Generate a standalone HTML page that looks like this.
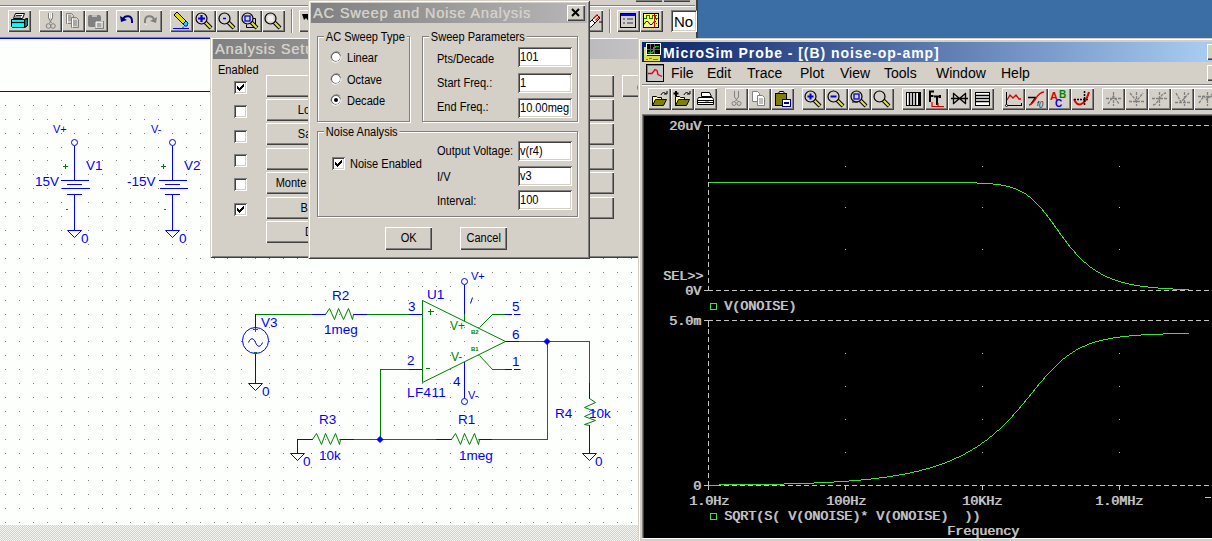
<!DOCTYPE html><html><head><meta charset="utf-8"><style>html,body{margin:0;padding:0;}body{width:1212px;height:541px;overflow:hidden;position:relative;background:#d4d0c8;font-family:'Liberation Sans', sans-serif;}div{box-sizing:border-box;}</style></head><body>
<div style="position:absolute;left:0px;top:0px;width:697px;height:38px;background:#d4d0c8"></div>
<div style="position:absolute;left:400px;top:0px;width:40px;height:2px;background:#808080;border-bottom:1px solid #404040"></div>
<div style="position:absolute;left:636px;top:0px;width:26px;height:2px;background:#808080;border-bottom:1px solid #404040"></div>
<div style="position:absolute;left:664px;top:0px;width:26px;height:2px;background:#808080;border-bottom:1px solid #404040"></div>
<div style="position:absolute;left:0px;top:5px;width:695px;height:1px;background:#808080"></div>
<div style="position:absolute;left:0px;top:6px;width:695px;height:1px;background:#fff"></div>
<div style="position:absolute;left:696px;top:0px;width:2px;height:38px;background:#404040"></div>
<div style="position:absolute;left:8px;top:10px;width:23px;height:22px;background:#d4d0c8;box-shadow:inset 1px 1px #fff, inset -1px -1px #404040, inset -2px -2px #808080;"></div>
<div style="position:absolute;left:39px;top:10px;width:23px;height:22px;background:#d4d0c8;box-shadow:inset 1px 1px #fff, inset -1px -1px #404040, inset -2px -2px #808080;"></div>
<div style="position:absolute;left:62px;top:10px;width:23px;height:22px;background:#d4d0c8;box-shadow:inset 1px 1px #fff, inset -1px -1px #404040, inset -2px -2px #808080;"></div>
<div style="position:absolute;left:85px;top:10px;width:23px;height:22px;background:#d4d0c8;box-shadow:inset 1px 1px #fff, inset -1px -1px #404040, inset -2px -2px #808080;"></div>
<div style="position:absolute;left:116px;top:10px;width:23px;height:22px;background:#d4d0c8;box-shadow:inset 1px 1px #fff, inset -1px -1px #404040, inset -2px -2px #808080;"></div>
<div style="position:absolute;left:139px;top:10px;width:23px;height:22px;background:#d4d0c8;box-shadow:inset 1px 1px #fff, inset -1px -1px #404040, inset -2px -2px #808080;"></div>
<div style="position:absolute;left:170px;top:10px;width:23px;height:22px;background:#d4d0c8;box-shadow:inset 1px 1px #fff, inset -1px -1px #404040, inset -2px -2px #808080;"></div>
<div style="position:absolute;left:193px;top:10px;width:23px;height:22px;background:#d4d0c8;box-shadow:inset 1px 1px #fff, inset -1px -1px #404040, inset -2px -2px #808080;"></div>
<div style="position:absolute;left:216px;top:10px;width:23px;height:22px;background:#d4d0c8;box-shadow:inset 1px 1px #fff, inset -1px -1px #404040, inset -2px -2px #808080;"></div>
<div style="position:absolute;left:239px;top:10px;width:23px;height:22px;background:#d4d0c8;box-shadow:inset 1px 1px #fff, inset -1px -1px #404040, inset -2px -2px #808080;"></div>
<div style="position:absolute;left:262px;top:10px;width:23px;height:22px;background:#d4d0c8;box-shadow:inset 1px 1px #fff, inset -1px -1px #404040, inset -2px -2px #808080;"></div>
<div style="position:absolute;left:299px;top:10px;width:23px;height:22px;background:#d4d0c8;box-shadow:inset 1px 1px #fff, inset -1px -1px #404040, inset -2px -2px #808080;"></div>
<div style="position:absolute;left:580px;top:10px;width:23px;height:22px;background:#d4d0c8;box-shadow:inset 1px 1px #fff, inset -1px -1px #404040, inset -2px -2px #808080;"></div>
<div style="position:absolute;left:617px;top:10px;width:23px;height:22px;background:#d4d0c8;box-shadow:inset 1px 1px #fff, inset -1px -1px #404040, inset -2px -2px #808080;"></div>
<div style="position:absolute;left:640px;top:10px;width:23px;height:22px;background:#d4d0c8;box-shadow:inset 1px 1px #fff, inset -1px -1px #404040, inset -2px -2px #808080;"></div>
<div style="position:absolute;left:291px;top:9px;width:1px;height:24px;background:#808080"></div>
<div style="position:absolute;left:292px;top:9px;width:1px;height:24px;background:#fff"></div>
<div style="position:absolute;left:609px;top:9px;width:1px;height:24px;background:#808080"></div>
<div style="position:absolute;left:610px;top:9px;width:1px;height:24px;background:#fff"></div>
<div style="position:absolute;left:671px;top:10px;width:26px;height:22px;background:#fff;box-shadow:inset 1px 1px #808080, inset -1px -1px #fff, inset 2px 2px #404040, inset -2px -2px #d4d0c8;"></div>
<div style="position:absolute;left:674px;top:14px;font-size:15px;line-height:1;color:#000;white-space:pre;">No</div>
<svg style="position:absolute;left:0;top:0" width="697" height="38"><g transform="translate(8,10)"><path d="M7.5 3.5h9l-2 5h-9z" fill="#fff" stroke="#000"/><path d="M8 5.5h6M7 7h6" stroke="#000" stroke-width="0.8"/><path d="M3.5 9.5h13l3 -1v7l-3 2h-12l-1-1z" fill="#00ffff" stroke="#000"/><path d="M4 12.5h12.5" stroke="#000" stroke-width="1.2"/><path d="M16.5 9.5v8l3-2v-7z" fill="#008080" stroke="#000"/></g><g transform="translate(39,10)" fill="none" stroke="#808080"><path d="M9.5 3v5l3 5M13.5 3v5l-3 5"/><path d="M10.5 3v5M12.5 3v5" stroke="#fff"/><circle cx="9.5" cy="16" r="2.3"/><circle cx="14" cy="16" r="2.3"/></g><g transform="translate(62,10)" stroke="#808080" fill="#d4d0c8"><path d="M4.5 3.5h5l2 2v8h-7z"/><path d="M9.5 7.5h5l2 2v8h-7z" fill="#d4d0c8"/><path d="M6 6h3M6 8h4M6 10h4M11 11h4M11 13h4M11 15h4" fill="none"/><path d="M10.5 8.5v9M5.5 4.5v9" stroke="#fff"/></g><g transform="translate(85,10)"><rect x="3" y="5" width="13" height="12" rx="2" fill="#808080"/><path d="M7 6h5" stroke="#fff"/><rect x="10.5" y="11.5" width="8" height="7" fill="#d4d0c8" stroke="#808080"/><path d="M12 14h4M12 16h4" stroke="#808080"/><path d="M11 12h7M11 12v6" stroke="#fff"/></g><g transform="translate(116,10)"><path d="M7 9c2-4 9-4 9 2v2" fill="none" stroke="#000080" stroke-width="2"/><path d="M4 6l1 6 6-2z" fill="#000080"/></g><g transform="translate(139,10)"><path d="M15 9c-2-4-9-4-9 2v2" fill="none" stroke="#808080" stroke-width="2"/><path d="M18 7l-1 6-6-2z" fill="#808080"/><path d="M7 14v1" stroke="#fff"/></g><g transform="translate(170,10)"><path d="M4 5l3-3 9 9-3 3z" fill="#e0e000" stroke="#000"/><path d="M13 14l3-3 2 2-1 3-2 0z" fill="#00e0ff" stroke="#0000ff"/><path d="M3 18.5h16" stroke="#0000ff"/><path d="M14 16.5l-2 2" stroke="#0000ff"/></g><g transform="translate(193,10)"><path d="M12 12l6 6" stroke="#000" stroke-width="4"/><path d="M12.3 12.3l5.4 5.4" stroke="#e0e040" stroke-width="2"/><circle cx="8.5" cy="8.5" r="5.5" fill="#d4d0c8" stroke="#000" stroke-width="1.2"/><path d="M5 8.5h7M8.5 5v7" stroke="#0000e0" stroke-width="2.2"/></g><g transform="translate(216,10)"><path d="M12 12l6 6" stroke="#000" stroke-width="4"/><path d="M12.3 12.3l5.4 5.4" stroke="#e0e040" stroke-width="2"/><circle cx="8.5" cy="8.5" r="5.5" fill="#d4d0c8" stroke="#000" stroke-width="1.2"/><path d="M7 8.5h3" stroke="#0000e0" stroke-width="1.5"/></g><g transform="translate(239,10)"><path d="M9.5 8.5h7v9h-9v-3" fill="#d4d0c8" stroke="#000"/><path d="M12 12l6 6" stroke="#000" stroke-width="4"/><path d="M12.3 12.3l5.4 5.4" stroke="#e0e040" stroke-width="2"/><circle cx="8.5" cy="8.5" r="5.5" fill="#d4d0c8" stroke="#000" stroke-width="1.2"/><rect x="6" y="6" width="5" height="5" fill="none" stroke="#0000e0" stroke-width="1.3"/></g><g transform="translate(262,10)"><path d="M12 12l6 6" stroke="#000" stroke-width="4"/><path d="M12.3 12.3l5.4 5.4" stroke="#e0e040" stroke-width="2"/><circle cx="8.5" cy="8.5" r="5.5" fill="#d4d0c8" stroke="#000" stroke-width="1.2"/><rect x="5.5" y="5.5" width="6" height="6" fill="#f0f0f0" stroke="none"/></g><g transform="translate(617,10)" shape-rendering="crispEdges"><rect x="3.5" y="3.5" width="15" height="14" fill="#d4d0c8" stroke="#000"/><rect x="4" y="4" width="14" height="2" fill="#0000ff"/><path d="M6 9h2M10 9h6M6 13h2M10 13h6" stroke="#808080" stroke-width="1.5"/></g><g transform="translate(640,10)" shape-rendering="crispEdges"><rect x="3.5" y="3.5" width="15" height="14" fill="#ffff60" stroke="#000"/><path d="M4 8.5h2v-3h3v3h3v-3h3v3h3" fill="none" stroke="#008000"/><path d="M4 14.5l2-3h2l2 3h2l2-3h2" fill="none" stroke="#0000c0" shape-rendering="auto"/><path d="M14.5 4v13" stroke="#e00000"/><path d="M16 5v1M16 9v1M16 13v1" stroke="#e00000"/></g><g transform="translate(299,10)"><path d="M3 4h8l-2 2 4 5-2 2-4-5-2 2z" fill="#000"/><path d="M9 11l3 3" stroke="#fff"/></g><g transform="translate(580,10)"><path d="M8 14l4-4c2-1 4 1 3 3l-4 4c-2 1-4-1-3-3z" fill="#fff" stroke="#000"/><path d="M12 10l5-5 3 3-5 5z" fill="#fff" stroke="#000"/><path d="M13.5 8.5l4-4M15.5 10.5l4-4" stroke="#e00000" stroke-width="1.3"/><path d="M19 12h3" stroke="#000"/></g></svg>
<div style="position:absolute;left:698px;top:0px;width:514px;height:38px;background:#3a6ea5"></div>
<div style="position:absolute;left:0px;top:37px;width:639px;height:488px;background:#fcfffc"></div>
<div style="position:absolute;left:0px;top:37px;width:639px;height:1px;background:#808080"></div>
<div style="position:absolute;left:0px;top:525px;width:639px;height:16px;background-color:#d4d0c8;background-image:repeating-conic-gradient(#f4f4f0 0% 25%, #d4d0c8 0% 50%);background-size:2px 2px"></div>
<svg style="position:absolute;left:0;top:0" width="639" height="525"><rect x="0" y="38" width="639" height="1" fill="#0000ff"/><rect x="0" y="91" width="639" height="1" fill="#0000ff"/><path d="M5 105h1v1h-1zM19 105h1v1h-1zM33 105h1v1h-1zM47 105h1v1h-1zM61 105h1v1h-1zM74 105h1v1h-1zM88 105h1v1h-1zM102 105h1v1h-1zM116 105h1v1h-1zM130 105h1v1h-1zM144 105h1v1h-1zM158 105h1v1h-1zM172 105h1v1h-1zM186 105h1v1h-1zM200 105h1v1h-1zM214 105h1v1h-1zM227 105h1v1h-1zM241 105h1v1h-1zM255 105h1v1h-1zM269 105h1v1h-1zM283 105h1v1h-1zM297 105h1v1h-1zM311 105h1v1h-1zM325 105h1v1h-1zM339 105h1v1h-1zM353 105h1v1h-1zM367 105h1v1h-1zM380 105h1v1h-1zM394 105h1v1h-1zM408 105h1v1h-1zM422 105h1v1h-1zM436 105h1v1h-1zM450 105h1v1h-1zM464 105h1v1h-1zM478 105h1v1h-1zM492 105h1v1h-1zM506 105h1v1h-1zM520 105h1v1h-1zM533 105h1v1h-1zM547 105h1v1h-1zM561 105h1v1h-1zM575 105h1v1h-1zM589 105h1v1h-1zM603 105h1v1h-1zM617 105h1v1h-1zM631 105h1v1h-1zM5 119h1v1h-1zM19 119h1v1h-1zM33 119h1v1h-1zM47 119h1v1h-1zM61 119h1v1h-1zM74 119h1v1h-1zM88 119h1v1h-1zM102 119h1v1h-1zM116 119h1v1h-1zM130 119h1v1h-1zM144 119h1v1h-1zM158 119h1v1h-1zM172 119h1v1h-1zM186 119h1v1h-1zM200 119h1v1h-1zM214 119h1v1h-1zM227 119h1v1h-1zM241 119h1v1h-1zM255 119h1v1h-1zM269 119h1v1h-1zM283 119h1v1h-1zM297 119h1v1h-1zM311 119h1v1h-1zM325 119h1v1h-1zM339 119h1v1h-1zM353 119h1v1h-1zM367 119h1v1h-1zM380 119h1v1h-1zM394 119h1v1h-1zM408 119h1v1h-1zM422 119h1v1h-1zM436 119h1v1h-1zM450 119h1v1h-1zM464 119h1v1h-1zM478 119h1v1h-1zM492 119h1v1h-1zM506 119h1v1h-1zM520 119h1v1h-1zM533 119h1v1h-1zM547 119h1v1h-1zM561 119h1v1h-1zM575 119h1v1h-1zM589 119h1v1h-1zM603 119h1v1h-1zM617 119h1v1h-1zM631 119h1v1h-1zM5 133h1v1h-1zM19 133h1v1h-1zM33 133h1v1h-1zM47 133h1v1h-1zM61 133h1v1h-1zM74 133h1v1h-1zM88 133h1v1h-1zM102 133h1v1h-1zM116 133h1v1h-1zM130 133h1v1h-1zM144 133h1v1h-1zM158 133h1v1h-1zM172 133h1v1h-1zM186 133h1v1h-1zM200 133h1v1h-1zM214 133h1v1h-1zM227 133h1v1h-1zM241 133h1v1h-1zM255 133h1v1h-1zM269 133h1v1h-1zM283 133h1v1h-1zM297 133h1v1h-1zM311 133h1v1h-1zM325 133h1v1h-1zM339 133h1v1h-1zM353 133h1v1h-1zM367 133h1v1h-1zM380 133h1v1h-1zM394 133h1v1h-1zM408 133h1v1h-1zM422 133h1v1h-1zM436 133h1v1h-1zM450 133h1v1h-1zM464 133h1v1h-1zM478 133h1v1h-1zM492 133h1v1h-1zM506 133h1v1h-1zM520 133h1v1h-1zM533 133h1v1h-1zM547 133h1v1h-1zM561 133h1v1h-1zM575 133h1v1h-1zM589 133h1v1h-1zM603 133h1v1h-1zM617 133h1v1h-1zM631 133h1v1h-1zM5 147h1v1h-1zM19 147h1v1h-1zM33 147h1v1h-1zM47 147h1v1h-1zM61 147h1v1h-1zM74 147h1v1h-1zM88 147h1v1h-1zM102 147h1v1h-1zM116 147h1v1h-1zM130 147h1v1h-1zM144 147h1v1h-1zM158 147h1v1h-1zM172 147h1v1h-1zM186 147h1v1h-1zM200 147h1v1h-1zM214 147h1v1h-1zM227 147h1v1h-1zM241 147h1v1h-1zM255 147h1v1h-1zM269 147h1v1h-1zM283 147h1v1h-1zM297 147h1v1h-1zM311 147h1v1h-1zM325 147h1v1h-1zM339 147h1v1h-1zM353 147h1v1h-1zM367 147h1v1h-1zM380 147h1v1h-1zM394 147h1v1h-1zM408 147h1v1h-1zM422 147h1v1h-1zM436 147h1v1h-1zM450 147h1v1h-1zM464 147h1v1h-1zM478 147h1v1h-1zM492 147h1v1h-1zM506 147h1v1h-1zM520 147h1v1h-1zM533 147h1v1h-1zM547 147h1v1h-1zM561 147h1v1h-1zM575 147h1v1h-1zM589 147h1v1h-1zM603 147h1v1h-1zM617 147h1v1h-1zM631 147h1v1h-1zM5 160h1v1h-1zM19 160h1v1h-1zM33 160h1v1h-1zM47 160h1v1h-1zM61 160h1v1h-1zM74 160h1v1h-1zM88 160h1v1h-1zM102 160h1v1h-1zM116 160h1v1h-1zM130 160h1v1h-1zM144 160h1v1h-1zM158 160h1v1h-1zM172 160h1v1h-1zM186 160h1v1h-1zM200 160h1v1h-1zM214 160h1v1h-1zM227 160h1v1h-1zM241 160h1v1h-1zM255 160h1v1h-1zM269 160h1v1h-1zM283 160h1v1h-1zM297 160h1v1h-1zM311 160h1v1h-1zM325 160h1v1h-1zM339 160h1v1h-1zM353 160h1v1h-1zM367 160h1v1h-1zM380 160h1v1h-1zM394 160h1v1h-1zM408 160h1v1h-1zM422 160h1v1h-1zM436 160h1v1h-1zM450 160h1v1h-1zM464 160h1v1h-1zM478 160h1v1h-1zM492 160h1v1h-1zM506 160h1v1h-1zM520 160h1v1h-1zM533 160h1v1h-1zM547 160h1v1h-1zM561 160h1v1h-1zM575 160h1v1h-1zM589 160h1v1h-1zM603 160h1v1h-1zM617 160h1v1h-1zM631 160h1v1h-1zM5 174h1v1h-1zM19 174h1v1h-1zM33 174h1v1h-1zM47 174h1v1h-1zM61 174h1v1h-1zM74 174h1v1h-1zM88 174h1v1h-1zM102 174h1v1h-1zM116 174h1v1h-1zM130 174h1v1h-1zM144 174h1v1h-1zM158 174h1v1h-1zM172 174h1v1h-1zM186 174h1v1h-1zM200 174h1v1h-1zM214 174h1v1h-1zM227 174h1v1h-1zM241 174h1v1h-1zM255 174h1v1h-1zM269 174h1v1h-1zM283 174h1v1h-1zM297 174h1v1h-1zM311 174h1v1h-1zM325 174h1v1h-1zM339 174h1v1h-1zM353 174h1v1h-1zM367 174h1v1h-1zM380 174h1v1h-1zM394 174h1v1h-1zM408 174h1v1h-1zM422 174h1v1h-1zM436 174h1v1h-1zM450 174h1v1h-1zM464 174h1v1h-1zM478 174h1v1h-1zM492 174h1v1h-1zM506 174h1v1h-1zM520 174h1v1h-1zM533 174h1v1h-1zM547 174h1v1h-1zM561 174h1v1h-1zM575 174h1v1h-1zM589 174h1v1h-1zM603 174h1v1h-1zM617 174h1v1h-1zM631 174h1v1h-1zM5 188h1v1h-1zM19 188h1v1h-1zM33 188h1v1h-1zM47 188h1v1h-1zM61 188h1v1h-1zM74 188h1v1h-1zM88 188h1v1h-1zM102 188h1v1h-1zM116 188h1v1h-1zM130 188h1v1h-1zM144 188h1v1h-1zM158 188h1v1h-1zM172 188h1v1h-1zM186 188h1v1h-1zM200 188h1v1h-1zM214 188h1v1h-1zM227 188h1v1h-1zM241 188h1v1h-1zM255 188h1v1h-1zM269 188h1v1h-1zM283 188h1v1h-1zM297 188h1v1h-1zM311 188h1v1h-1zM325 188h1v1h-1zM339 188h1v1h-1zM353 188h1v1h-1zM367 188h1v1h-1zM380 188h1v1h-1zM394 188h1v1h-1zM408 188h1v1h-1zM422 188h1v1h-1zM436 188h1v1h-1zM450 188h1v1h-1zM464 188h1v1h-1zM478 188h1v1h-1zM492 188h1v1h-1zM506 188h1v1h-1zM520 188h1v1h-1zM533 188h1v1h-1zM547 188h1v1h-1zM561 188h1v1h-1zM575 188h1v1h-1zM589 188h1v1h-1zM603 188h1v1h-1zM617 188h1v1h-1zM631 188h1v1h-1zM5 202h1v1h-1zM19 202h1v1h-1zM33 202h1v1h-1zM47 202h1v1h-1zM61 202h1v1h-1zM74 202h1v1h-1zM88 202h1v1h-1zM102 202h1v1h-1zM116 202h1v1h-1zM130 202h1v1h-1zM144 202h1v1h-1zM158 202h1v1h-1zM172 202h1v1h-1zM186 202h1v1h-1zM200 202h1v1h-1zM214 202h1v1h-1zM227 202h1v1h-1zM241 202h1v1h-1zM255 202h1v1h-1zM269 202h1v1h-1zM283 202h1v1h-1zM297 202h1v1h-1zM311 202h1v1h-1zM325 202h1v1h-1zM339 202h1v1h-1zM353 202h1v1h-1zM367 202h1v1h-1zM380 202h1v1h-1zM394 202h1v1h-1zM408 202h1v1h-1zM422 202h1v1h-1zM436 202h1v1h-1zM450 202h1v1h-1zM464 202h1v1h-1zM478 202h1v1h-1zM492 202h1v1h-1zM506 202h1v1h-1zM520 202h1v1h-1zM533 202h1v1h-1zM547 202h1v1h-1zM561 202h1v1h-1zM575 202h1v1h-1zM589 202h1v1h-1zM603 202h1v1h-1zM617 202h1v1h-1zM631 202h1v1h-1zM5 216h1v1h-1zM19 216h1v1h-1zM33 216h1v1h-1zM47 216h1v1h-1zM61 216h1v1h-1zM74 216h1v1h-1zM88 216h1v1h-1zM102 216h1v1h-1zM116 216h1v1h-1zM130 216h1v1h-1zM144 216h1v1h-1zM158 216h1v1h-1zM172 216h1v1h-1zM186 216h1v1h-1zM200 216h1v1h-1zM214 216h1v1h-1zM227 216h1v1h-1zM241 216h1v1h-1zM255 216h1v1h-1zM269 216h1v1h-1zM283 216h1v1h-1zM297 216h1v1h-1zM311 216h1v1h-1zM325 216h1v1h-1zM339 216h1v1h-1zM353 216h1v1h-1zM367 216h1v1h-1zM380 216h1v1h-1zM394 216h1v1h-1zM408 216h1v1h-1zM422 216h1v1h-1zM436 216h1v1h-1zM450 216h1v1h-1zM464 216h1v1h-1zM478 216h1v1h-1zM492 216h1v1h-1zM506 216h1v1h-1zM520 216h1v1h-1zM533 216h1v1h-1zM547 216h1v1h-1zM561 216h1v1h-1zM575 216h1v1h-1zM589 216h1v1h-1zM603 216h1v1h-1zM617 216h1v1h-1zM631 216h1v1h-1zM5 230h1v1h-1zM19 230h1v1h-1zM33 230h1v1h-1zM47 230h1v1h-1zM61 230h1v1h-1zM74 230h1v1h-1zM88 230h1v1h-1zM102 230h1v1h-1zM116 230h1v1h-1zM130 230h1v1h-1zM144 230h1v1h-1zM158 230h1v1h-1zM172 230h1v1h-1zM186 230h1v1h-1zM200 230h1v1h-1zM214 230h1v1h-1zM227 230h1v1h-1zM241 230h1v1h-1zM255 230h1v1h-1zM269 230h1v1h-1zM283 230h1v1h-1zM297 230h1v1h-1zM311 230h1v1h-1zM325 230h1v1h-1zM339 230h1v1h-1zM353 230h1v1h-1zM367 230h1v1h-1zM380 230h1v1h-1zM394 230h1v1h-1zM408 230h1v1h-1zM422 230h1v1h-1zM436 230h1v1h-1zM450 230h1v1h-1zM464 230h1v1h-1zM478 230h1v1h-1zM492 230h1v1h-1zM506 230h1v1h-1zM520 230h1v1h-1zM533 230h1v1h-1zM547 230h1v1h-1zM561 230h1v1h-1zM575 230h1v1h-1zM589 230h1v1h-1zM603 230h1v1h-1zM617 230h1v1h-1zM631 230h1v1h-1zM5 244h1v1h-1zM19 244h1v1h-1zM33 244h1v1h-1zM47 244h1v1h-1zM61 244h1v1h-1zM74 244h1v1h-1zM88 244h1v1h-1zM102 244h1v1h-1zM116 244h1v1h-1zM130 244h1v1h-1zM144 244h1v1h-1zM158 244h1v1h-1zM172 244h1v1h-1zM186 244h1v1h-1zM200 244h1v1h-1zM214 244h1v1h-1zM227 244h1v1h-1zM241 244h1v1h-1zM255 244h1v1h-1zM269 244h1v1h-1zM283 244h1v1h-1zM297 244h1v1h-1zM311 244h1v1h-1zM325 244h1v1h-1zM339 244h1v1h-1zM353 244h1v1h-1zM367 244h1v1h-1zM380 244h1v1h-1zM394 244h1v1h-1zM408 244h1v1h-1zM422 244h1v1h-1zM436 244h1v1h-1zM450 244h1v1h-1zM464 244h1v1h-1zM478 244h1v1h-1zM492 244h1v1h-1zM506 244h1v1h-1zM520 244h1v1h-1zM533 244h1v1h-1zM547 244h1v1h-1zM561 244h1v1h-1zM575 244h1v1h-1zM589 244h1v1h-1zM603 244h1v1h-1zM617 244h1v1h-1zM631 244h1v1h-1zM5 258h1v1h-1zM19 258h1v1h-1zM33 258h1v1h-1zM47 258h1v1h-1zM61 258h1v1h-1zM74 258h1v1h-1zM88 258h1v1h-1zM102 258h1v1h-1zM116 258h1v1h-1zM130 258h1v1h-1zM144 258h1v1h-1zM158 258h1v1h-1zM172 258h1v1h-1zM186 258h1v1h-1zM200 258h1v1h-1zM214 258h1v1h-1zM227 258h1v1h-1zM241 258h1v1h-1zM255 258h1v1h-1zM269 258h1v1h-1zM283 258h1v1h-1zM297 258h1v1h-1zM311 258h1v1h-1zM325 258h1v1h-1zM339 258h1v1h-1zM353 258h1v1h-1zM367 258h1v1h-1zM380 258h1v1h-1zM394 258h1v1h-1zM408 258h1v1h-1zM422 258h1v1h-1zM436 258h1v1h-1zM450 258h1v1h-1zM464 258h1v1h-1zM478 258h1v1h-1zM492 258h1v1h-1zM506 258h1v1h-1zM520 258h1v1h-1zM533 258h1v1h-1zM547 258h1v1h-1zM561 258h1v1h-1zM575 258h1v1h-1zM589 258h1v1h-1zM603 258h1v1h-1zM617 258h1v1h-1zM631 258h1v1h-1zM5 272h1v1h-1zM19 272h1v1h-1zM33 272h1v1h-1zM47 272h1v1h-1zM61 272h1v1h-1zM74 272h1v1h-1zM88 272h1v1h-1zM102 272h1v1h-1zM116 272h1v1h-1zM130 272h1v1h-1zM144 272h1v1h-1zM158 272h1v1h-1zM172 272h1v1h-1zM186 272h1v1h-1zM200 272h1v1h-1zM214 272h1v1h-1zM227 272h1v1h-1zM241 272h1v1h-1zM255 272h1v1h-1zM269 272h1v1h-1zM283 272h1v1h-1zM297 272h1v1h-1zM311 272h1v1h-1zM325 272h1v1h-1zM339 272h1v1h-1zM353 272h1v1h-1zM367 272h1v1h-1zM380 272h1v1h-1zM394 272h1v1h-1zM408 272h1v1h-1zM422 272h1v1h-1zM436 272h1v1h-1zM450 272h1v1h-1zM464 272h1v1h-1zM478 272h1v1h-1zM492 272h1v1h-1zM506 272h1v1h-1zM520 272h1v1h-1zM533 272h1v1h-1zM547 272h1v1h-1zM561 272h1v1h-1zM575 272h1v1h-1zM589 272h1v1h-1zM603 272h1v1h-1zM617 272h1v1h-1zM631 272h1v1h-1zM5 286h1v1h-1zM19 286h1v1h-1zM33 286h1v1h-1zM47 286h1v1h-1zM61 286h1v1h-1zM74 286h1v1h-1zM88 286h1v1h-1zM102 286h1v1h-1zM116 286h1v1h-1zM130 286h1v1h-1zM144 286h1v1h-1zM158 286h1v1h-1zM172 286h1v1h-1zM186 286h1v1h-1zM200 286h1v1h-1zM214 286h1v1h-1zM227 286h1v1h-1zM241 286h1v1h-1zM255 286h1v1h-1zM269 286h1v1h-1zM283 286h1v1h-1zM297 286h1v1h-1zM311 286h1v1h-1zM325 286h1v1h-1zM339 286h1v1h-1zM353 286h1v1h-1zM367 286h1v1h-1zM380 286h1v1h-1zM394 286h1v1h-1zM408 286h1v1h-1zM422 286h1v1h-1zM436 286h1v1h-1zM450 286h1v1h-1zM464 286h1v1h-1zM478 286h1v1h-1zM492 286h1v1h-1zM506 286h1v1h-1zM520 286h1v1h-1zM533 286h1v1h-1zM547 286h1v1h-1zM561 286h1v1h-1zM575 286h1v1h-1zM589 286h1v1h-1zM603 286h1v1h-1zM617 286h1v1h-1zM631 286h1v1h-1zM5 300h1v1h-1zM19 300h1v1h-1zM33 300h1v1h-1zM47 300h1v1h-1zM61 300h1v1h-1zM74 300h1v1h-1zM88 300h1v1h-1zM102 300h1v1h-1zM116 300h1v1h-1zM130 300h1v1h-1zM144 300h1v1h-1zM158 300h1v1h-1zM172 300h1v1h-1zM186 300h1v1h-1zM200 300h1v1h-1zM214 300h1v1h-1zM227 300h1v1h-1zM241 300h1v1h-1zM255 300h1v1h-1zM269 300h1v1h-1zM283 300h1v1h-1zM297 300h1v1h-1zM311 300h1v1h-1zM325 300h1v1h-1zM339 300h1v1h-1zM353 300h1v1h-1zM367 300h1v1h-1zM380 300h1v1h-1zM394 300h1v1h-1zM408 300h1v1h-1zM422 300h1v1h-1zM436 300h1v1h-1zM450 300h1v1h-1zM464 300h1v1h-1zM478 300h1v1h-1zM492 300h1v1h-1zM506 300h1v1h-1zM520 300h1v1h-1zM533 300h1v1h-1zM547 300h1v1h-1zM561 300h1v1h-1zM575 300h1v1h-1zM589 300h1v1h-1zM603 300h1v1h-1zM617 300h1v1h-1zM631 300h1v1h-1zM5 314h1v1h-1zM19 314h1v1h-1zM33 314h1v1h-1zM47 314h1v1h-1zM61 314h1v1h-1zM74 314h1v1h-1zM88 314h1v1h-1zM102 314h1v1h-1zM116 314h1v1h-1zM130 314h1v1h-1zM144 314h1v1h-1zM158 314h1v1h-1zM172 314h1v1h-1zM186 314h1v1h-1zM200 314h1v1h-1zM214 314h1v1h-1zM227 314h1v1h-1zM241 314h1v1h-1zM255 314h1v1h-1zM269 314h1v1h-1zM283 314h1v1h-1zM297 314h1v1h-1zM311 314h1v1h-1zM325 314h1v1h-1zM339 314h1v1h-1zM353 314h1v1h-1zM367 314h1v1h-1zM380 314h1v1h-1zM394 314h1v1h-1zM408 314h1v1h-1zM422 314h1v1h-1zM436 314h1v1h-1zM450 314h1v1h-1zM464 314h1v1h-1zM478 314h1v1h-1zM492 314h1v1h-1zM506 314h1v1h-1zM520 314h1v1h-1zM533 314h1v1h-1zM547 314h1v1h-1zM561 314h1v1h-1zM575 314h1v1h-1zM589 314h1v1h-1zM603 314h1v1h-1zM617 314h1v1h-1zM631 314h1v1h-1zM5 327h1v1h-1zM19 327h1v1h-1zM33 327h1v1h-1zM47 327h1v1h-1zM61 327h1v1h-1zM74 327h1v1h-1zM88 327h1v1h-1zM102 327h1v1h-1zM116 327h1v1h-1zM130 327h1v1h-1zM144 327h1v1h-1zM158 327h1v1h-1zM172 327h1v1h-1zM186 327h1v1h-1zM200 327h1v1h-1zM214 327h1v1h-1zM227 327h1v1h-1zM241 327h1v1h-1zM255 327h1v1h-1zM269 327h1v1h-1zM283 327h1v1h-1zM297 327h1v1h-1zM311 327h1v1h-1zM325 327h1v1h-1zM339 327h1v1h-1zM353 327h1v1h-1zM367 327h1v1h-1zM380 327h1v1h-1zM394 327h1v1h-1zM408 327h1v1h-1zM422 327h1v1h-1zM436 327h1v1h-1zM450 327h1v1h-1zM464 327h1v1h-1zM478 327h1v1h-1zM492 327h1v1h-1zM506 327h1v1h-1zM520 327h1v1h-1zM533 327h1v1h-1zM547 327h1v1h-1zM561 327h1v1h-1zM575 327h1v1h-1zM589 327h1v1h-1zM603 327h1v1h-1zM617 327h1v1h-1zM631 327h1v1h-1zM5 341h1v1h-1zM19 341h1v1h-1zM33 341h1v1h-1zM47 341h1v1h-1zM61 341h1v1h-1zM74 341h1v1h-1zM88 341h1v1h-1zM102 341h1v1h-1zM116 341h1v1h-1zM130 341h1v1h-1zM144 341h1v1h-1zM158 341h1v1h-1zM172 341h1v1h-1zM186 341h1v1h-1zM200 341h1v1h-1zM214 341h1v1h-1zM227 341h1v1h-1zM241 341h1v1h-1zM255 341h1v1h-1zM269 341h1v1h-1zM283 341h1v1h-1zM297 341h1v1h-1zM311 341h1v1h-1zM325 341h1v1h-1zM339 341h1v1h-1zM353 341h1v1h-1zM367 341h1v1h-1zM380 341h1v1h-1zM394 341h1v1h-1zM408 341h1v1h-1zM422 341h1v1h-1zM436 341h1v1h-1zM450 341h1v1h-1zM464 341h1v1h-1zM478 341h1v1h-1zM492 341h1v1h-1zM506 341h1v1h-1zM520 341h1v1h-1zM533 341h1v1h-1zM547 341h1v1h-1zM561 341h1v1h-1zM575 341h1v1h-1zM589 341h1v1h-1zM603 341h1v1h-1zM617 341h1v1h-1zM631 341h1v1h-1zM5 355h1v1h-1zM19 355h1v1h-1zM33 355h1v1h-1zM47 355h1v1h-1zM61 355h1v1h-1zM74 355h1v1h-1zM88 355h1v1h-1zM102 355h1v1h-1zM116 355h1v1h-1zM130 355h1v1h-1zM144 355h1v1h-1zM158 355h1v1h-1zM172 355h1v1h-1zM186 355h1v1h-1zM200 355h1v1h-1zM214 355h1v1h-1zM227 355h1v1h-1zM241 355h1v1h-1zM255 355h1v1h-1zM269 355h1v1h-1zM283 355h1v1h-1zM297 355h1v1h-1zM311 355h1v1h-1zM325 355h1v1h-1zM339 355h1v1h-1zM353 355h1v1h-1zM367 355h1v1h-1zM380 355h1v1h-1zM394 355h1v1h-1zM408 355h1v1h-1zM422 355h1v1h-1zM436 355h1v1h-1zM450 355h1v1h-1zM464 355h1v1h-1zM478 355h1v1h-1zM492 355h1v1h-1zM506 355h1v1h-1zM520 355h1v1h-1zM533 355h1v1h-1zM547 355h1v1h-1zM561 355h1v1h-1zM575 355h1v1h-1zM589 355h1v1h-1zM603 355h1v1h-1zM617 355h1v1h-1zM631 355h1v1h-1zM5 369h1v1h-1zM19 369h1v1h-1zM33 369h1v1h-1zM47 369h1v1h-1zM61 369h1v1h-1zM74 369h1v1h-1zM88 369h1v1h-1zM102 369h1v1h-1zM116 369h1v1h-1zM130 369h1v1h-1zM144 369h1v1h-1zM158 369h1v1h-1zM172 369h1v1h-1zM186 369h1v1h-1zM200 369h1v1h-1zM214 369h1v1h-1zM227 369h1v1h-1zM241 369h1v1h-1zM255 369h1v1h-1zM269 369h1v1h-1zM283 369h1v1h-1zM297 369h1v1h-1zM311 369h1v1h-1zM325 369h1v1h-1zM339 369h1v1h-1zM353 369h1v1h-1zM367 369h1v1h-1zM380 369h1v1h-1zM394 369h1v1h-1zM408 369h1v1h-1zM422 369h1v1h-1zM436 369h1v1h-1zM450 369h1v1h-1zM464 369h1v1h-1zM478 369h1v1h-1zM492 369h1v1h-1zM506 369h1v1h-1zM520 369h1v1h-1zM533 369h1v1h-1zM547 369h1v1h-1zM561 369h1v1h-1zM575 369h1v1h-1zM589 369h1v1h-1zM603 369h1v1h-1zM617 369h1v1h-1zM631 369h1v1h-1zM5 383h1v1h-1zM19 383h1v1h-1zM33 383h1v1h-1zM47 383h1v1h-1zM61 383h1v1h-1zM74 383h1v1h-1zM88 383h1v1h-1zM102 383h1v1h-1zM116 383h1v1h-1zM130 383h1v1h-1zM144 383h1v1h-1zM158 383h1v1h-1zM172 383h1v1h-1zM186 383h1v1h-1zM200 383h1v1h-1zM214 383h1v1h-1zM227 383h1v1h-1zM241 383h1v1h-1zM255 383h1v1h-1zM269 383h1v1h-1zM283 383h1v1h-1zM297 383h1v1h-1zM311 383h1v1h-1zM325 383h1v1h-1zM339 383h1v1h-1zM353 383h1v1h-1zM367 383h1v1h-1zM380 383h1v1h-1zM394 383h1v1h-1zM408 383h1v1h-1zM422 383h1v1h-1zM436 383h1v1h-1zM450 383h1v1h-1zM464 383h1v1h-1zM478 383h1v1h-1zM492 383h1v1h-1zM506 383h1v1h-1zM520 383h1v1h-1zM533 383h1v1h-1zM547 383h1v1h-1zM561 383h1v1h-1zM575 383h1v1h-1zM589 383h1v1h-1zM603 383h1v1h-1zM617 383h1v1h-1zM631 383h1v1h-1zM5 397h1v1h-1zM19 397h1v1h-1zM33 397h1v1h-1zM47 397h1v1h-1zM61 397h1v1h-1zM74 397h1v1h-1zM88 397h1v1h-1zM102 397h1v1h-1zM116 397h1v1h-1zM130 397h1v1h-1zM144 397h1v1h-1zM158 397h1v1h-1zM172 397h1v1h-1zM186 397h1v1h-1zM200 397h1v1h-1zM214 397h1v1h-1zM227 397h1v1h-1zM241 397h1v1h-1zM255 397h1v1h-1zM269 397h1v1h-1zM283 397h1v1h-1zM297 397h1v1h-1zM311 397h1v1h-1zM325 397h1v1h-1zM339 397h1v1h-1zM353 397h1v1h-1zM367 397h1v1h-1zM380 397h1v1h-1zM394 397h1v1h-1zM408 397h1v1h-1zM422 397h1v1h-1zM436 397h1v1h-1zM450 397h1v1h-1zM464 397h1v1h-1zM478 397h1v1h-1zM492 397h1v1h-1zM506 397h1v1h-1zM520 397h1v1h-1zM533 397h1v1h-1zM547 397h1v1h-1zM561 397h1v1h-1zM575 397h1v1h-1zM589 397h1v1h-1zM603 397h1v1h-1zM617 397h1v1h-1zM631 397h1v1h-1zM5 411h1v1h-1zM19 411h1v1h-1zM33 411h1v1h-1zM47 411h1v1h-1zM61 411h1v1h-1zM74 411h1v1h-1zM88 411h1v1h-1zM102 411h1v1h-1zM116 411h1v1h-1zM130 411h1v1h-1zM144 411h1v1h-1zM158 411h1v1h-1zM172 411h1v1h-1zM186 411h1v1h-1zM200 411h1v1h-1zM214 411h1v1h-1zM227 411h1v1h-1zM241 411h1v1h-1zM255 411h1v1h-1zM269 411h1v1h-1zM283 411h1v1h-1zM297 411h1v1h-1zM311 411h1v1h-1zM325 411h1v1h-1zM339 411h1v1h-1zM353 411h1v1h-1zM367 411h1v1h-1zM380 411h1v1h-1zM394 411h1v1h-1zM408 411h1v1h-1zM422 411h1v1h-1zM436 411h1v1h-1zM450 411h1v1h-1zM464 411h1v1h-1zM478 411h1v1h-1zM492 411h1v1h-1zM506 411h1v1h-1zM520 411h1v1h-1zM533 411h1v1h-1zM547 411h1v1h-1zM561 411h1v1h-1zM575 411h1v1h-1zM589 411h1v1h-1zM603 411h1v1h-1zM617 411h1v1h-1zM631 411h1v1h-1zM5 425h1v1h-1zM19 425h1v1h-1zM33 425h1v1h-1zM47 425h1v1h-1zM61 425h1v1h-1zM74 425h1v1h-1zM88 425h1v1h-1zM102 425h1v1h-1zM116 425h1v1h-1zM130 425h1v1h-1zM144 425h1v1h-1zM158 425h1v1h-1zM172 425h1v1h-1zM186 425h1v1h-1zM200 425h1v1h-1zM214 425h1v1h-1zM227 425h1v1h-1zM241 425h1v1h-1zM255 425h1v1h-1zM269 425h1v1h-1zM283 425h1v1h-1zM297 425h1v1h-1zM311 425h1v1h-1zM325 425h1v1h-1zM339 425h1v1h-1zM353 425h1v1h-1zM367 425h1v1h-1zM380 425h1v1h-1zM394 425h1v1h-1zM408 425h1v1h-1zM422 425h1v1h-1zM436 425h1v1h-1zM450 425h1v1h-1zM464 425h1v1h-1zM478 425h1v1h-1zM492 425h1v1h-1zM506 425h1v1h-1zM520 425h1v1h-1zM533 425h1v1h-1zM547 425h1v1h-1zM561 425h1v1h-1zM575 425h1v1h-1zM589 425h1v1h-1zM603 425h1v1h-1zM617 425h1v1h-1zM631 425h1v1h-1zM5 439h1v1h-1zM19 439h1v1h-1zM33 439h1v1h-1zM47 439h1v1h-1zM61 439h1v1h-1zM74 439h1v1h-1zM88 439h1v1h-1zM102 439h1v1h-1zM116 439h1v1h-1zM130 439h1v1h-1zM144 439h1v1h-1zM158 439h1v1h-1zM172 439h1v1h-1zM186 439h1v1h-1zM200 439h1v1h-1zM214 439h1v1h-1zM227 439h1v1h-1zM241 439h1v1h-1zM255 439h1v1h-1zM269 439h1v1h-1zM283 439h1v1h-1zM297 439h1v1h-1zM311 439h1v1h-1zM325 439h1v1h-1zM339 439h1v1h-1zM353 439h1v1h-1zM367 439h1v1h-1zM380 439h1v1h-1zM394 439h1v1h-1zM408 439h1v1h-1zM422 439h1v1h-1zM436 439h1v1h-1zM450 439h1v1h-1zM464 439h1v1h-1zM478 439h1v1h-1zM492 439h1v1h-1zM506 439h1v1h-1zM520 439h1v1h-1zM533 439h1v1h-1zM547 439h1v1h-1zM561 439h1v1h-1zM575 439h1v1h-1zM589 439h1v1h-1zM603 439h1v1h-1zM617 439h1v1h-1zM631 439h1v1h-1zM5 453h1v1h-1zM19 453h1v1h-1zM33 453h1v1h-1zM47 453h1v1h-1zM61 453h1v1h-1zM74 453h1v1h-1zM88 453h1v1h-1zM102 453h1v1h-1zM116 453h1v1h-1zM130 453h1v1h-1zM144 453h1v1h-1zM158 453h1v1h-1zM172 453h1v1h-1zM186 453h1v1h-1zM200 453h1v1h-1zM214 453h1v1h-1zM227 453h1v1h-1zM241 453h1v1h-1zM255 453h1v1h-1zM269 453h1v1h-1zM283 453h1v1h-1zM297 453h1v1h-1zM311 453h1v1h-1zM325 453h1v1h-1zM339 453h1v1h-1zM353 453h1v1h-1zM367 453h1v1h-1zM380 453h1v1h-1zM394 453h1v1h-1zM408 453h1v1h-1zM422 453h1v1h-1zM436 453h1v1h-1zM450 453h1v1h-1zM464 453h1v1h-1zM478 453h1v1h-1zM492 453h1v1h-1zM506 453h1v1h-1zM520 453h1v1h-1zM533 453h1v1h-1zM547 453h1v1h-1zM561 453h1v1h-1zM575 453h1v1h-1zM589 453h1v1h-1zM603 453h1v1h-1zM617 453h1v1h-1zM631 453h1v1h-1zM5 467h1v1h-1zM19 467h1v1h-1zM33 467h1v1h-1zM47 467h1v1h-1zM61 467h1v1h-1zM74 467h1v1h-1zM88 467h1v1h-1zM102 467h1v1h-1zM116 467h1v1h-1zM130 467h1v1h-1zM144 467h1v1h-1zM158 467h1v1h-1zM172 467h1v1h-1zM186 467h1v1h-1zM200 467h1v1h-1zM214 467h1v1h-1zM227 467h1v1h-1zM241 467h1v1h-1zM255 467h1v1h-1zM269 467h1v1h-1zM283 467h1v1h-1zM297 467h1v1h-1zM311 467h1v1h-1zM325 467h1v1h-1zM339 467h1v1h-1zM353 467h1v1h-1zM367 467h1v1h-1zM380 467h1v1h-1zM394 467h1v1h-1zM408 467h1v1h-1zM422 467h1v1h-1zM436 467h1v1h-1zM450 467h1v1h-1zM464 467h1v1h-1zM478 467h1v1h-1zM492 467h1v1h-1zM506 467h1v1h-1zM520 467h1v1h-1zM533 467h1v1h-1zM547 467h1v1h-1zM561 467h1v1h-1zM575 467h1v1h-1zM589 467h1v1h-1zM603 467h1v1h-1zM617 467h1v1h-1zM631 467h1v1h-1zM5 480h1v1h-1zM19 480h1v1h-1zM33 480h1v1h-1zM47 480h1v1h-1zM61 480h1v1h-1zM74 480h1v1h-1zM88 480h1v1h-1zM102 480h1v1h-1zM116 480h1v1h-1zM130 480h1v1h-1zM144 480h1v1h-1zM158 480h1v1h-1zM172 480h1v1h-1zM186 480h1v1h-1zM200 480h1v1h-1zM214 480h1v1h-1zM227 480h1v1h-1zM241 480h1v1h-1zM255 480h1v1h-1zM269 480h1v1h-1zM283 480h1v1h-1zM297 480h1v1h-1zM311 480h1v1h-1zM325 480h1v1h-1zM339 480h1v1h-1zM353 480h1v1h-1zM367 480h1v1h-1zM380 480h1v1h-1zM394 480h1v1h-1zM408 480h1v1h-1zM422 480h1v1h-1zM436 480h1v1h-1zM450 480h1v1h-1zM464 480h1v1h-1zM478 480h1v1h-1zM492 480h1v1h-1zM506 480h1v1h-1zM520 480h1v1h-1zM533 480h1v1h-1zM547 480h1v1h-1zM561 480h1v1h-1zM575 480h1v1h-1zM589 480h1v1h-1zM603 480h1v1h-1zM617 480h1v1h-1zM631 480h1v1h-1zM5 494h1v1h-1zM19 494h1v1h-1zM33 494h1v1h-1zM47 494h1v1h-1zM61 494h1v1h-1zM74 494h1v1h-1zM88 494h1v1h-1zM102 494h1v1h-1zM116 494h1v1h-1zM130 494h1v1h-1zM144 494h1v1h-1zM158 494h1v1h-1zM172 494h1v1h-1zM186 494h1v1h-1zM200 494h1v1h-1zM214 494h1v1h-1zM227 494h1v1h-1zM241 494h1v1h-1zM255 494h1v1h-1zM269 494h1v1h-1zM283 494h1v1h-1zM297 494h1v1h-1zM311 494h1v1h-1zM325 494h1v1h-1zM339 494h1v1h-1zM353 494h1v1h-1zM367 494h1v1h-1zM380 494h1v1h-1zM394 494h1v1h-1zM408 494h1v1h-1zM422 494h1v1h-1zM436 494h1v1h-1zM450 494h1v1h-1zM464 494h1v1h-1zM478 494h1v1h-1zM492 494h1v1h-1zM506 494h1v1h-1zM520 494h1v1h-1zM533 494h1v1h-1zM547 494h1v1h-1zM561 494h1v1h-1zM575 494h1v1h-1zM589 494h1v1h-1zM603 494h1v1h-1zM617 494h1v1h-1zM631 494h1v1h-1zM5 508h1v1h-1zM19 508h1v1h-1zM33 508h1v1h-1zM47 508h1v1h-1zM61 508h1v1h-1zM74 508h1v1h-1zM88 508h1v1h-1zM102 508h1v1h-1zM116 508h1v1h-1zM130 508h1v1h-1zM144 508h1v1h-1zM158 508h1v1h-1zM172 508h1v1h-1zM186 508h1v1h-1zM200 508h1v1h-1zM214 508h1v1h-1zM227 508h1v1h-1zM241 508h1v1h-1zM255 508h1v1h-1zM269 508h1v1h-1zM283 508h1v1h-1zM297 508h1v1h-1zM311 508h1v1h-1zM325 508h1v1h-1zM339 508h1v1h-1zM353 508h1v1h-1zM367 508h1v1h-1zM380 508h1v1h-1zM394 508h1v1h-1zM408 508h1v1h-1zM422 508h1v1h-1zM436 508h1v1h-1zM450 508h1v1h-1zM464 508h1v1h-1zM478 508h1v1h-1zM492 508h1v1h-1zM506 508h1v1h-1zM520 508h1v1h-1zM533 508h1v1h-1zM547 508h1v1h-1zM561 508h1v1h-1zM575 508h1v1h-1zM589 508h1v1h-1zM603 508h1v1h-1zM617 508h1v1h-1zM631 508h1v1h-1zM5 522h1v1h-1zM19 522h1v1h-1zM33 522h1v1h-1zM47 522h1v1h-1zM61 522h1v1h-1zM74 522h1v1h-1zM88 522h1v1h-1zM102 522h1v1h-1zM116 522h1v1h-1zM130 522h1v1h-1zM144 522h1v1h-1zM158 522h1v1h-1zM172 522h1v1h-1zM186 522h1v1h-1zM200 522h1v1h-1zM214 522h1v1h-1zM227 522h1v1h-1zM241 522h1v1h-1zM255 522h1v1h-1zM269 522h1v1h-1zM283 522h1v1h-1zM297 522h1v1h-1zM311 522h1v1h-1zM325 522h1v1h-1zM339 522h1v1h-1zM353 522h1v1h-1zM367 522h1v1h-1zM380 522h1v1h-1zM394 522h1v1h-1zM408 522h1v1h-1zM422 522h1v1h-1zM436 522h1v1h-1zM450 522h1v1h-1zM464 522h1v1h-1zM478 522h1v1h-1zM492 522h1v1h-1zM506 522h1v1h-1zM520 522h1v1h-1zM533 522h1v1h-1zM547 522h1v1h-1zM561 522h1v1h-1zM575 522h1v1h-1zM589 522h1v1h-1zM603 522h1v1h-1zM617 522h1v1h-1zM631 522h1v1h-1z" fill="#808080"/><g shape-rendering="crispEdges"><rect x="74" y="146" width="1" height="35" fill="#0000ff"/><rect x="61" y="180" width="28" height="1" fill="#0000ff"/><rect x="67" y="184" width="15" height="1" fill="#0000ff"/><rect x="62" y="188" width="28" height="1" fill="#0000ff"/><rect x="67" y="194" width="15" height="1" fill="#0000ff"/><rect x="74" y="194" width="1" height="37" fill="#0000ff"/><rect x="63" y="166" width="5" height="1" fill="#008000"/><rect x="65" y="164" width="1" height="5" fill="#008000"/><rect x="66" y="209" width="2" height="1" fill="#008000"/><rect x="172" y="146" width="1" height="35" fill="#0000ff"/><rect x="159" y="180" width="28" height="1" fill="#0000ff"/><rect x="165" y="184" width="15" height="1" fill="#0000ff"/><rect x="160" y="188" width="28" height="1" fill="#0000ff"/><rect x="165" y="194" width="15" height="1" fill="#0000ff"/><rect x="172" y="194" width="1" height="37" fill="#0000ff"/><rect x="161" y="166" width="5" height="1" fill="#008000"/><rect x="163" y="164" width="1" height="5" fill="#008000"/><rect x="164" y="209" width="2" height="1" fill="#008000"/><rect x="255" y="314" width="58" height="1" fill="#008000"/><rect x="255" y="314" width="1" height="14" fill="#0000ff"/><rect x="255" y="354" width="1" height="30" fill="#0000ff"/><rect x="253" y="329" width="5" height="1" fill="#008000"/><rect x="255" y="327" width="1" height="5" fill="#008000"/><rect x="254" y="352" width="3" height="1" fill="#008000"/><rect x="312" y="314" width="14" height="1" fill="#0000ff"/><rect x="353" y="314" width="15" height="1" fill="#0000ff"/><rect x="367" y="314" width="43" height="1" fill="#008000"/><rect x="409" y="314" width="14" height="1" fill="#0000ff"/><rect x="428" y="311" width="6" height="1" fill="#008000"/><rect x="430" y="309" width="1" height="6" fill="#008000"/><rect x="426" y="368" width="4" height="1" fill="#008000"/><rect x="464" y="285" width="1" height="30" fill="#0000ff"/><rect x="464" y="314" width="1" height="7" fill="#008000"/><rect x="464" y="362" width="1" height="36" fill="#0000ff"/><rect x="492" y="314" width="14" height="1" fill="#008000"/><rect x="505" y="314" width="7" height="1" fill="#0000ff"/><rect x="514" y="314" width="6" height="1" fill="#0000ff"/><rect x="492" y="369" width="14" height="1" fill="#008000"/><rect x="505" y="369" width="7" height="1" fill="#0000ff"/><rect x="514" y="369" width="6" height="1" fill="#0000ff"/><rect x="505" y="341" width="15" height="1" fill="#0000ff"/><rect x="519" y="341" width="71" height="1" fill="#008000"/><rect x="547" y="341" width="1" height="99" fill="#008000"/><rect x="589" y="341" width="1" height="43" fill="#008000"/><rect x="589" y="383" width="1" height="16" fill="#0000ff"/><rect x="589" y="425" width="1" height="29" fill="#0000ff"/><rect x="380" y="369" width="30" height="1" fill="#008000"/><rect x="409" y="369" width="14" height="1" fill="#0000ff"/><rect x="380" y="369" width="1" height="71" fill="#008000"/><rect x="297" y="439" width="1" height="15" fill="#0000ff"/><rect x="297" y="439" width="16" height="1" fill="#0000ff"/><rect x="340" y="439" width="15" height="1" fill="#0000ff"/><rect x="354" y="439" width="83" height="1" fill="#008000"/><rect x="436" y="439" width="16" height="1" fill="#0000ff"/><rect x="479" y="439" width="14" height="1" fill="#0000ff"/><rect x="492" y="439" width="56" height="1" fill="#008000"/></g><circle cx="74.5" cy="142.5" r="3" fill="none" stroke="#0000ff" stroke-width="1"/><polyline points="67.5,230.5 81.5,230.5 74.5,237.5 67.5,230.5" fill="none" stroke="#0000ff" stroke-width="1"/><text x="86" y="170" fill="#0000ff" font-size="13.5" font-family="Liberation Sans, sans-serif" >V1</text><text x="35" y="186" fill="#0000ff" font-size="13.5" font-family="Liberation Sans, sans-serif" >15V</text><text x="53" y="133" fill="#0000ff" font-size="11" font-family="Liberation Sans, sans-serif" >V+</text><text x="81" y="243" fill="#0000ff" font-size="13.5" font-family="Liberation Sans, sans-serif" >0</text><circle cx="172.5" cy="142.5" r="3" fill="none" stroke="#0000ff" stroke-width="1"/><polyline points="165.5,230.5 179.5,230.5 172.5,237.5 165.5,230.5" fill="none" stroke="#0000ff" stroke-width="1"/><text x="184" y="170" fill="#0000ff" font-size="13.5" font-family="Liberation Sans, sans-serif" >V2</text><text x="127" y="186" fill="#0000ff" font-size="13.5" font-family="Liberation Sans, sans-serif" >-15V</text><text x="151" y="133" fill="#0000ff" font-size="11" font-family="Liberation Sans, sans-serif" >V-</text><text x="179" y="243" fill="#0000ff" font-size="13.5" font-family="Liberation Sans, sans-serif" >0</text><circle cx="255.5" cy="340.5" r="13" fill="none" stroke="#0000ff" stroke-width="1"/><path d="M248.5 342.5c2-5 5-5 7 0s5 5 7 0" fill="none" stroke="#0000ff"/><polyline points="248.5,383.5 262.5,383.5 255.5,390.5 248.5,383.5" fill="none" stroke="#0000ff" stroke-width="1"/><text x="262" y="396" fill="#0000ff" font-size="13.5" font-family="Liberation Sans, sans-serif" >0</text><text x="261" y="327" fill="#0000ff" font-size="13.5" font-family="Liberation Sans, sans-serif" >V3</text><polyline points="325.5,314.5 329.5,308.5 334.5,319.5 338.5,308.5 343.5,319.5 348.5,308.5 352.5,319.5 353.5,314.5" fill="none" stroke="#008000" stroke-width="1"/><text x="332" y="300" fill="#0000ff" font-size="13.5" font-family="Liberation Sans, sans-serif" >R2</text><text x="324" y="334" fill="#0000ff" font-size="13.5" font-family="Liberation Sans, sans-serif" >1meg</text><text x="408" y="311" fill="#0000ff" font-size="13.5" font-family="Liberation Sans, sans-serif" >3</text><polyline points="422.5,300.5 422.5,382.5 505.5,341.5 422.5,300.5" fill="none" stroke="#008000" stroke-width="1"/><text x="427" y="299" fill="#0000ff" font-size="13.5" font-family="Liberation Sans, sans-serif" >U1</text><circle cx="464.5" cy="281.5" r="3" fill="none" stroke="#0000ff" stroke-width="1"/><text x="471" y="280" fill="#0000ff" font-size="11" font-family="Liberation Sans, sans-serif" >V+</text><polyline points="470.5,303.5 472.5,297.5" fill="none" stroke="#0000ff" stroke-width="1"/><text x="450" y="330" fill="#008000" font-size="12" font-family="Liberation Sans, sans-serif" >V+</text><text x="471" y="334" fill="#008000" font-size="6" font-family="Liberation Sans, sans-serif" font-weight="bold">B2</text><text x="471" y="351" fill="#008000" font-size="6" font-family="Liberation Sans, sans-serif" font-weight="bold">B1</text><text x="451" y="361" fill="#008000" font-size="12" font-family="Liberation Sans, sans-serif" >V-</text><circle cx="464.5" cy="401.5" r="3" fill="none" stroke="#0000ff" stroke-width="1"/><text x="453" y="386" fill="#0000ff" font-size="13.5" font-family="Liberation Sans, sans-serif" >4</text><text x="468" y="399" fill="#0000ff" font-size="11" font-family="Liberation Sans, sans-serif" >V-</text><text x="407" y="397" fill="#0000ff" font-size="13.5" font-family="Liberation Sans, sans-serif" letter-spacing="0.4">LF411</text><text x="407" y="365" fill="#0000ff" font-size="13.5" font-family="Liberation Sans, sans-serif" >2</text><polyline points="479.5,327.5 492.5,314.5" fill="none" stroke="#008000" stroke-width="1"/><text x="512" y="311" fill="#0000ff" font-size="13.5" font-family="Liberation Sans, sans-serif" >5</text><polyline points="479.5,355.5 492.5,369.5" fill="none" stroke="#008000" stroke-width="1"/><text x="512" y="366" fill="#0000ff" font-size="13.5" font-family="Liberation Sans, sans-serif" >1</text><text x="512" y="339" fill="#0000ff" font-size="13.5" font-family="Liberation Sans, sans-serif" >6</text><path d="M544 341.5l3-3 3 3-3 3z" fill="#0000ff" stroke="#0000ff"/><polyline points="589.5,398.5 595.5,402.5 584.5,407.5 595.5,411.5 584.5,416.5 595.5,420.5 584.5,424.5 589.5,425.5" fill="none" stroke="#008000" stroke-width="1"/><polyline points="582.5,453.5 596.5,453.5 589.5,460.5 582.5,453.5" fill="none" stroke="#0000ff" stroke-width="1"/><text x="555" y="418" fill="#0000ff" font-size="13.5" font-family="Liberation Sans, sans-serif" >R4</text><text x="589" y="418" fill="#0000ff" font-size="13.5" font-family="Liberation Sans, sans-serif" >10k</text><text x="595" y="466" fill="#0000ff" font-size="13.5" font-family="Liberation Sans, sans-serif" >0</text><polyline points="290.5,453.5 304.5,453.5 297.5,460.5 290.5,453.5" fill="none" stroke="#0000ff" stroke-width="1"/><polyline points="312.5,439.5 316.5,433.5 321.5,444.5 325.5,433.5 330.5,444.5 335.5,433.5 339.5,444.5 340.5,439.5" fill="none" stroke="#008000" stroke-width="1"/><polyline points="451.5,439.5 455.5,433.5 460.5,444.5 464.5,433.5 469.5,444.5 474.5,433.5 478.5,444.5 479.5,439.5" fill="none" stroke="#008000" stroke-width="1"/><path d="M377 439.5l3-3 3 3-3 3z" fill="#0000ff" stroke="#0000ff"/><text x="319" y="424" fill="#0000ff" font-size="13.5" font-family="Liberation Sans, sans-serif" >R3</text><text x="319" y="460" fill="#0000ff" font-size="13.5" font-family="Liberation Sans, sans-serif" >10k</text><text x="303" y="466" fill="#0000ff" font-size="13.5" font-family="Liberation Sans, sans-serif" >0</text><text x="458" y="424" fill="#0000ff" font-size="13.5" font-family="Liberation Sans, sans-serif" >R1</text><text x="459" y="460" fill="#0000ff" font-size="13.5" font-family="Liberation Sans, sans-serif" >1meg</text></svg>
<div style="position:absolute;left:210px;top:37px;width:460px;height:221px;background:#d4d0c8;box-shadow:inset 1px 1px #d4d0c8, inset -1px -1px #404040, inset 2px 2px #fff, inset -2px -2px #808080;"></div>
<div style="position:absolute;left:213px;top:39px;width:426px;height:20px;background:linear-gradient(to right,#808080 0px,#c4c2c4 426px)"></div>
<div style="position:absolute;left:215px;top:42px;font-size:14.5px;line-height:1;color:#d4d0c8;white-space:pre;letter-spacing:0.85px;text-shadow:0.3px 0 0 #d4d0c8">Analysis Setup</div>
<div style="position:absolute;left:218px;top:64px;font-size:12px;line-height:1;color:#000;white-space:pre;transform:scaleX(0.92);transform-origin:0 0">Enabled</div>
<div style="position:absolute;left:234px;top:81px;width:13px;height:13px;background:#fff;box-shadow:inset 1px 1px #808080, inset -1px -1px #fff, inset 2px 2px #404040, inset -2px -2px #d4d0c8;"></div><svg style="position:absolute;left:234px;top:81px" width="13" height="13" shape-rendering="crispEdges"><path d="M9 3h1v1h-1zM8 4h1v1h-1zM9 4h1v1h-1zM3 5h1v1h-1zM7 5h1v1h-1zM8 5h1v1h-1zM9 5h1v1h-1zM3 6h1v1h-1zM4 6h1v1h-1zM6 6h1v1h-1zM7 6h1v1h-1zM8 6h1v1h-1zM3 7h1v1h-1zM4 7h1v1h-1zM5 7h1v1h-1zM6 7h1v1h-1zM7 7h1v1h-1zM4 8h1v1h-1zM5 8h1v1h-1zM6 8h1v1h-1zM5 9h1v1h-1z" fill="#000"/></svg>
<div style="position:absolute;left:234px;top:105px;width:13px;height:13px;background:#fff;box-shadow:inset 1px 1px #808080, inset -1px -1px #fff, inset 2px 2px #404040, inset -2px -2px #d4d0c8;"></div>
<div style="position:absolute;left:234px;top:130px;width:13px;height:13px;background:#fff;box-shadow:inset 1px 1px #808080, inset -1px -1px #fff, inset 2px 2px #404040, inset -2px -2px #d4d0c8;"></div>
<div style="position:absolute;left:234px;top:154px;width:13px;height:13px;background:#fff;box-shadow:inset 1px 1px #808080, inset -1px -1px #fff, inset 2px 2px #404040, inset -2px -2px #d4d0c8;"></div>
<div style="position:absolute;left:234px;top:178px;width:13px;height:13px;background:#fff;box-shadow:inset 1px 1px #808080, inset -1px -1px #fff, inset 2px 2px #404040, inset -2px -2px #d4d0c8;"></div>
<div style="position:absolute;left:234px;top:203px;width:13px;height:13px;background:#fff;box-shadow:inset 1px 1px #808080, inset -1px -1px #fff, inset 2px 2px #404040, inset -2px -2px #d4d0c8;"></div><svg style="position:absolute;left:234px;top:203px" width="13" height="13" shape-rendering="crispEdges"><path d="M9 3h1v1h-1zM8 4h1v1h-1zM9 4h1v1h-1zM3 5h1v1h-1zM7 5h1v1h-1zM8 5h1v1h-1zM9 5h1v1h-1zM3 6h1v1h-1zM4 6h1v1h-1zM6 6h1v1h-1zM7 6h1v1h-1zM8 6h1v1h-1zM3 7h1v1h-1zM4 7h1v1h-1zM5 7h1v1h-1zM6 7h1v1h-1zM7 7h1v1h-1zM4 8h1v1h-1zM5 8h1v1h-1zM6 8h1v1h-1zM5 9h1v1h-1z" fill="#000"/></svg>
<div style="position:absolute;left:266px;top:75px;width:150px;height:22px;background:#d4d0c8;box-shadow:inset 1px 1px #fff, inset -1px -1px #404040, inset -2px -2px #808080;"></div>
<div style="position:absolute;left:460px;top:75px;width:154px;height:22px;background:#d4d0c8;box-shadow:inset 1px 1px #fff, inset -1px -1px #404040, inset -2px -2px #808080;"></div>
<div style="position:absolute;left:266px;top:99px;width:150px;height:22px;background:#d4d0c8;box-shadow:inset 1px 1px #fff, inset -1px -1px #404040, inset -2px -2px #808080;"></div>
<div style="position:absolute;left:460px;top:99px;width:154px;height:22px;background:#d4d0c8;box-shadow:inset 1px 1px #fff, inset -1px -1px #404040, inset -2px -2px #808080;"></div>
<div style="position:absolute;left:266px;top:123px;width:150px;height:22px;background:#d4d0c8;box-shadow:inset 1px 1px #fff, inset -1px -1px #404040, inset -2px -2px #808080;"></div>
<div style="position:absolute;left:460px;top:123px;width:154px;height:22px;background:#d4d0c8;box-shadow:inset 1px 1px #fff, inset -1px -1px #404040, inset -2px -2px #808080;"></div>
<div style="position:absolute;left:266px;top:148px;width:150px;height:22px;background:#d4d0c8;box-shadow:inset 1px 1px #fff, inset -1px -1px #404040, inset -2px -2px #808080;"></div>
<div style="position:absolute;left:460px;top:148px;width:154px;height:22px;background:#d4d0c8;box-shadow:inset 1px 1px #fff, inset -1px -1px #404040, inset -2px -2px #808080;"></div>
<div style="position:absolute;left:266px;top:172px;width:150px;height:22px;background:#d4d0c8;box-shadow:inset 1px 1px #fff, inset -1px -1px #404040, inset -2px -2px #808080;"></div>
<div style="position:absolute;left:460px;top:172px;width:154px;height:22px;background:#d4d0c8;box-shadow:inset 1px 1px #fff, inset -1px -1px #404040, inset -2px -2px #808080;"></div>
<div style="position:absolute;left:266px;top:197px;width:150px;height:22px;background:#d4d0c8;box-shadow:inset 1px 1px #fff, inset -1px -1px #404040, inset -2px -2px #808080;"></div>
<div style="position:absolute;left:460px;top:197px;width:154px;height:22px;background:#d4d0c8;box-shadow:inset 1px 1px #fff, inset -1px -1px #404040, inset -2px -2px #808080;"></div>
<div style="position:absolute;left:266px;top:221px;width:150px;height:22px;background:#d4d0c8;box-shadow:inset 1px 1px #fff, inset -1px -1px #404040, inset -2px -2px #808080;"></div>
<div style="position:absolute;left:266px;top:75px;width:150px;height:22px;font-size:12px;line-height:22px;text-align:center;"><span style="display:inline-block;transform:scaleX(0.92)">AC Sweep...</span></div>
<div style="position:absolute;left:266px;top:99px;width:150px;height:22px;font-size:12px;line-height:22px;text-align:center;"><span style="display:inline-block;transform:scaleX(0.92)">Load Bias Point...</span></div>
<div style="position:absolute;left:266px;top:123px;width:150px;height:22px;font-size:12px;line-height:22px;text-align:center;"><span style="display:inline-block;transform:scaleX(0.92)">Save Bias Point...</span></div>
<div style="position:absolute;left:266px;top:148px;width:150px;height:22px;font-size:12px;line-height:22px;text-align:center;"><span style="display:inline-block;transform:scaleX(0.92)">DC Sweep...</span></div>
<div style="position:absolute;left:266px;top:172px;width:150px;height:22px;font-size:12px;line-height:22px;text-align:center;"><span style="display:inline-block;transform:scaleX(0.92)">Monte Carlo/Worst Case...</span></div>
<div style="position:absolute;left:266px;top:197px;width:150px;height:22px;font-size:12px;line-height:22px;text-align:center;"><span style="display:inline-block;transform:scaleX(0.92)">Bias Point Detail</span></div>
<div style="position:absolute;left:266px;top:221px;width:150px;height:22px;font-size:12px;line-height:22px;text-align:center;"><span style="display:inline-block;transform:scaleX(0.92)">Digital Setup...</span></div>
<div style="position:absolute;left:622px;top:75px;width:60px;height:22px;background:#d4d0c8;box-shadow:inset 1px 1px #fff, inset -1px -1px #404040, inset -2px -2px #808080;"></div>
<div style="position:absolute;left:637px;top:82px;font-size:12px;line-height:1;color:#000;white-space:pre;transform:scaleX(0.92);transform-origin:0 0">Close</div>
<div style="position:absolute;left:308px;top:0px;width:282px;height:259px;background:#d4d0c8;box-shadow:inset 1px 1px #d4d0c8, inset -1px -1px #404040, inset 2px 2px #fff, inset -2px -2px #808080;"></div>
<div style="position:absolute;left:311px;top:3px;width:276px;height:20px;background:linear-gradient(to right,#808080 0px,#b8b6b8 276px)"></div>
<div style="position:absolute;left:313px;top:6px;font-size:14.5px;line-height:1;color:#d4d0c8;white-space:pre;letter-spacing:0.85px;text-shadow:0.3px 0 0 #d4d0c8">AC Sweep and Noise Analysis</div>
<div style="position:absolute;left:567px;top:5px;width:18px;height:16px;background:#d4d0c8;box-shadow:inset 1px 1px #fff, inset -1px -1px #404040, inset -2px -2px #808080;"></div>
<svg style="position:absolute;left:567px;top:5px" width="18" height="16"><path d="M5 4l7 7M12 4l-7 7" stroke="#000" stroke-width="2"/></svg>
<div style="position:absolute;left:317px;top:36px;width:93px;height:86px;border:1px solid #808080;box-shadow:1px 1px #fff, inset 1px 1px #fff;"></div><div style="position:absolute;left:324px;top:31px;padding:0 2px;background:#d4d0c8;font-size:12px;line-height:12px;white-space:pre;transform:scaleX(0.92);transform-origin:0 0">AC Sweep Type</div>
<div style="position:absolute;left:422px;top:36px;width:156px;height:86px;border:1px solid #808080;box-shadow:1px 1px #fff, inset 1px 1px #fff;"></div><div style="position:absolute;left:429px;top:31px;padding:0 2px;background:#d4d0c8;font-size:12px;line-height:12px;white-space:pre;transform:scaleX(0.92);transform-origin:0 0">Sweep Parameters</div>
<div style="position:absolute;left:317px;top:131px;width:261px;height:86px;border:1px solid #808080;box-shadow:1px 1px #fff, inset 1px 1px #fff;"></div><div style="position:absolute;left:324px;top:126px;padding:0 2px;background:#d4d0c8;font-size:12px;line-height:12px;white-space:pre;transform:scaleX(0.92);transform-origin:0 0">Noise Analysis</div>
<svg style="position:absolute;left:330px;top:51px" width="12" height="12"><path d="M1 7A5.5 5.5 0 0 1 10 2" fill="none" stroke="#808080" stroke-width="1"/><circle cx="6" cy="6" r="4.5" fill="#fff" stroke="#404040" stroke-width="0.8" stroke-dasharray="0"/><path d="M11 5A5.5 5.5 0 0 1 2 10" fill="none" stroke="#fff" stroke-width="1"/></svg>
<div style="position:absolute;left:347px;top:52px;font-size:12px;line-height:1;color:#000;white-space:pre;transform:scaleX(0.92);transform-origin:0 0">Linear</div>
<svg style="position:absolute;left:330px;top:73px" width="12" height="12"><path d="M1 7A5.5 5.5 0 0 1 10 2" fill="none" stroke="#808080" stroke-width="1"/><circle cx="6" cy="6" r="4.5" fill="#fff" stroke="#404040" stroke-width="0.8" stroke-dasharray="0"/><path d="M11 5A5.5 5.5 0 0 1 2 10" fill="none" stroke="#fff" stroke-width="1"/></svg>
<div style="position:absolute;left:347px;top:74px;font-size:12px;line-height:1;color:#000;white-space:pre;transform:scaleX(0.92);transform-origin:0 0">Octave</div>
<svg style="position:absolute;left:330px;top:94px" width="12" height="12"><path d="M1 7A5.5 5.5 0 0 1 10 2" fill="none" stroke="#808080" stroke-width="1"/><circle cx="6" cy="6" r="4.5" fill="#fff" stroke="#404040" stroke-width="0.8" stroke-dasharray="0"/><path d="M11 5A5.5 5.5 0 0 1 2 10" fill="none" stroke="#fff" stroke-width="1"/><circle cx="6" cy="6" r="2" fill="#000"/></svg>
<div style="position:absolute;left:347px;top:95px;font-size:12px;line-height:1;color:#000;white-space:pre;transform:scaleX(0.92);transform-origin:0 0">Decade</div>
<div style="position:absolute;left:437px;top:53px;font-size:12px;line-height:1;color:#000;white-space:pre;transform:scaleX(0.92);transform-origin:0 0">Pts/Decade</div>
<div style="position:absolute;left:518px;top:47px;width:54px;height:20px;background:#fff;box-shadow:inset 1px 1px #808080, inset -1px -1px #fff, inset 2px 2px #404040, inset -2px -2px #d4d0c8;"></div>
<div style="position:absolute;left:520px;top:51px;font-size:12px;line-height:1;color:#000;white-space:pre;transform:scaleX(0.92);transform-origin:0 0">101</div>
<div style="position:absolute;left:437px;top:77px;font-size:12px;line-height:1;color:#000;white-space:pre;transform:scaleX(0.92);transform-origin:0 0">Start Freq.:</div>
<div style="position:absolute;left:518px;top:73px;width:54px;height:20px;background:#fff;box-shadow:inset 1px 1px #808080, inset -1px -1px #fff, inset 2px 2px #404040, inset -2px -2px #d4d0c8;"></div>
<div style="position:absolute;left:520px;top:77px;font-size:12px;line-height:1;color:#000;white-space:pre;transform:scaleX(0.92);transform-origin:0 0">1</div>
<div style="position:absolute;left:437px;top:101px;font-size:12px;line-height:1;color:#000;white-space:pre;transform:scaleX(0.92);transform-origin:0 0">End Freq.:</div>
<div style="position:absolute;left:518px;top:98px;width:54px;height:20px;background:#fff;box-shadow:inset 1px 1px #808080, inset -1px -1px #fff, inset 2px 2px #404040, inset -2px -2px #d4d0c8;"></div>
<div style="position:absolute;left:520px;top:102px;font-size:12px;line-height:1;color:#000;white-space:pre;transform:scaleX(0.92);transform-origin:0 0">10.00meg</div>
<div style="position:absolute;left:332px;top:157px;width:13px;height:13px;background:#fff;box-shadow:inset 1px 1px #808080, inset -1px -1px #fff, inset 2px 2px #404040, inset -2px -2px #d4d0c8;"></div><svg style="position:absolute;left:332px;top:157px" width="13" height="13" shape-rendering="crispEdges"><path d="M9 3h1v1h-1zM8 4h1v1h-1zM9 4h1v1h-1zM3 5h1v1h-1zM7 5h1v1h-1zM8 5h1v1h-1zM9 5h1v1h-1zM3 6h1v1h-1zM4 6h1v1h-1zM6 6h1v1h-1zM7 6h1v1h-1zM8 6h1v1h-1zM3 7h1v1h-1zM4 7h1v1h-1zM5 7h1v1h-1zM6 7h1v1h-1zM7 7h1v1h-1zM4 8h1v1h-1zM5 8h1v1h-1zM6 8h1v1h-1zM5 9h1v1h-1z" fill="#000"/></svg>
<div style="position:absolute;left:350px;top:158px;font-size:12px;line-height:1;color:#000;white-space:pre;transform:scaleX(0.92);transform-origin:0 0">Noise Enabled</div>
<div style="position:absolute;left:437px;top:145px;font-size:12px;line-height:1;color:#000;white-space:pre;transform:scaleX(0.92);transform-origin:0 0">Output Voltage:</div>
<div style="position:absolute;left:518px;top:141px;width:54px;height:20px;background:#fff;box-shadow:inset 1px 1px #808080, inset -1px -1px #fff, inset 2px 2px #404040, inset -2px -2px #d4d0c8;"></div>
<div style="position:absolute;left:520px;top:145px;font-size:12px;line-height:1;color:#000;white-space:pre;transform:scaleX(0.92);transform-origin:0 0">v(r4)</div>
<div style="position:absolute;left:437px;top:171px;font-size:12px;line-height:1;color:#000;white-space:pre;transform:scaleX(0.92);transform-origin:0 0">I/V</div>
<div style="position:absolute;left:518px;top:166px;width:54px;height:20px;background:#fff;box-shadow:inset 1px 1px #808080, inset -1px -1px #fff, inset 2px 2px #404040, inset -2px -2px #d4d0c8;"></div>
<div style="position:absolute;left:520px;top:170px;font-size:12px;line-height:1;color:#000;white-space:pre;transform:scaleX(0.92);transform-origin:0 0">v3</div>
<div style="position:absolute;left:437px;top:195px;font-size:12px;line-height:1;color:#000;white-space:pre;transform:scaleX(0.92);transform-origin:0 0">Interval:</div>
<div style="position:absolute;left:518px;top:190px;width:54px;height:20px;background:#fff;box-shadow:inset 1px 1px #808080, inset -1px -1px #fff, inset 2px 2px #404040, inset -2px -2px #d4d0c8;"></div>
<div style="position:absolute;left:520px;top:194px;font-size:12px;line-height:1;color:#000;white-space:pre;transform:scaleX(0.92);transform-origin:0 0">100</div>
<div style="position:absolute;left:385px;top:227px;width:47px;height:23px;background:#d4d0c8;box-shadow:inset 1px 1px #fff, inset -1px -1px #404040, inset -2px -2px #808080;"></div>
<div style="position:absolute;left:385px;top:227px;width:47px;height:23px;font-size:12px;line-height:22px;text-align:center;"><span style="display:inline-block;transform:scaleX(0.92)">OK</span></div>
<div style="position:absolute;left:460px;top:227px;width:47px;height:23px;background:#d4d0c8;box-shadow:inset 1px 1px #fff, inset -1px -1px #404040, inset -2px -2px #808080;"></div>
<div style="position:absolute;left:460px;top:227px;width:47px;height:23px;font-size:12px;line-height:22px;text-align:center;"><span style="display:inline-block;transform:scaleX(0.92)">Cancel</span></div>
<div style="position:absolute;left:638px;top:38px;width:584px;height:503px;background:#d4d0c8;box-shadow:inset 1px 1px #d4d0c8, inset 2px 2px #fff;"></div>
<div style="position:absolute;left:642px;top:42px;width:580px;height:20px;background:linear-gradient(to right,#0a246a 0px,#a6caf0 560px)"></div>
<div style="position:absolute;left:663px;top:46px;font-size:14px;line-height:1;color:#fff;white-space:pre;font-weight:bold;letter-spacing:0.95px">MicroSim Probe - [(B) noise-op-amp]</div>
<svg style="position:absolute;left:642px;top:42px" width="20" height="20" shape-rendering="crispEdges"><rect x="2" y="5" width="3" height="13" fill="#e0e040"/><rect x="2" y="14" width="16" height="5" fill="#e0e040"/><path d="M4 17h2M7 16h3M11 17h5" stroke="#808000"/><rect x="4.5" y="1.5" width="14" height="11" fill="#000" stroke="#fff"/><path d="M8 2v10M12 2v10M5 7h13" stroke="#606060"/><path d="M6 10h4v-1h1v-4h2v-1h4" fill="none" stroke="#00c000"/></svg>
<div style="position:absolute;left:1207px;top:44px;width:18px;height:16px;background:#d4d0c8;box-shadow:inset 1px 1px #fff, inset -1px -1px #404040, inset -2px -2px #808080;"></div>
<div style="position:absolute;left:646px;top:64px;width:18px;height:18px;background:#c8c8c8;border:1px solid #000;box-shadow:inset 1px 1px #808080"></div>
<svg style="position:absolute;left:646px;top:64px" width="18" height="18"><path d="M2 9.5h4l3-4 2 1 1 4 2 1 2 1" fill="none" stroke="#e00000" stroke-width="1.3"/></svg>
<div style="position:absolute;left:671px;top:66px;font-size:14px;line-height:1;color:#000;white-space:pre;">File</div>
<div style="position:absolute;left:707px;top:66px;font-size:14px;line-height:1;color:#000;white-space:pre;">Edit</div>
<div style="position:absolute;left:747px;top:66px;font-size:14px;line-height:1;color:#000;white-space:pre;">Trace</div>
<div style="position:absolute;left:800px;top:66px;font-size:14px;line-height:1;color:#000;white-space:pre;">Plot</div>
<div style="position:absolute;left:840px;top:66px;font-size:14px;line-height:1;color:#000;white-space:pre;">View</div>
<div style="position:absolute;left:884px;top:66px;font-size:14px;line-height:1;color:#000;white-space:pre;">Tools</div>
<div style="position:absolute;left:936px;top:66px;font-size:14px;line-height:1;color:#000;white-space:pre;">Window</div>
<div style="position:absolute;left:1001px;top:66px;font-size:14px;line-height:1;color:#000;white-space:pre;">Help</div>
<div style="position:absolute;left:1207px;top:65px;width:18px;height:16px;background:#d4d0c8;box-shadow:inset 1px 1px #fff, inset -1px -1px #404040, inset -2px -2px #808080;"></div>
<div style="position:absolute;left:642px;top:84px;width:570px;height:1px;background:#808080"></div>
<div style="position:absolute;left:642px;top:85px;width:570px;height:1px;background:#fff"></div>
<div style="position:absolute;left:648px;top:88px;width:23px;height:22px;background:#d4d0c8;box-shadow:inset 1px 1px #fff, inset -1px -1px #404040, inset -2px -2px #808080;"></div>
<div style="position:absolute;left:671px;top:88px;width:23px;height:22px;background:#d4d0c8;box-shadow:inset 1px 1px #fff, inset -1px -1px #404040, inset -2px -2px #808080;"></div>
<div style="position:absolute;left:694px;top:88px;width:23px;height:22px;background:#d4d0c8;box-shadow:inset 1px 1px #fff, inset -1px -1px #404040, inset -2px -2px #808080;"></div>
<div style="position:absolute;left:725px;top:88px;width:23px;height:22px;background:#d4d0c8;box-shadow:inset 1px 1px #fff, inset -1px -1px #404040, inset -2px -2px #808080;"></div>
<div style="position:absolute;left:748px;top:88px;width:23px;height:22px;background:#d4d0c8;box-shadow:inset 1px 1px #fff, inset -1px -1px #404040, inset -2px -2px #808080;"></div>
<div style="position:absolute;left:771px;top:88px;width:23px;height:22px;background:#d4d0c8;box-shadow:inset 1px 1px #fff, inset -1px -1px #404040, inset -2px -2px #808080;"></div>
<div style="position:absolute;left:802px;top:88px;width:23px;height:22px;background:#d4d0c8;box-shadow:inset 1px 1px #fff, inset -1px -1px #404040, inset -2px -2px #808080;"></div>
<div style="position:absolute;left:825px;top:88px;width:23px;height:22px;background:#d4d0c8;box-shadow:inset 1px 1px #fff, inset -1px -1px #404040, inset -2px -2px #808080;"></div>
<div style="position:absolute;left:848px;top:88px;width:23px;height:22px;background:#d4d0c8;box-shadow:inset 1px 1px #fff, inset -1px -1px #404040, inset -2px -2px #808080;"></div>
<div style="position:absolute;left:871px;top:88px;width:23px;height:22px;background:#d4d0c8;box-shadow:inset 1px 1px #fff, inset -1px -1px #404040, inset -2px -2px #808080;"></div>
<div style="position:absolute;left:902px;top:88px;width:23px;height:22px;background:#d4d0c8;box-shadow:inset 1px 1px #fff, inset -1px -1px #404040, inset -2px -2px #808080;"></div>
<div style="position:absolute;left:925px;top:88px;width:23px;height:22px;background:#d4d0c8;box-shadow:inset 1px 1px #fff, inset -1px -1px #404040, inset -2px -2px #808080;"></div>
<div style="position:absolute;left:948px;top:88px;width:23px;height:22px;background:#d4d0c8;box-shadow:inset 1px 1px #fff, inset -1px -1px #404040, inset -2px -2px #808080;"></div>
<div style="position:absolute;left:971px;top:88px;width:23px;height:22px;background:#d4d0c8;box-shadow:inset 1px 1px #fff, inset -1px -1px #404040, inset -2px -2px #808080;"></div>
<div style="position:absolute;left:1002px;top:88px;width:23px;height:22px;background:#d4d0c8;box-shadow:inset 1px 1px #fff, inset -1px -1px #404040, inset -2px -2px #808080;"></div>
<div style="position:absolute;left:1025px;top:88px;width:23px;height:22px;background:#d4d0c8;box-shadow:inset 1px 1px #fff, inset -1px -1px #404040, inset -2px -2px #808080;"></div>
<div style="position:absolute;left:1048px;top:88px;width:23px;height:22px;background:#d4d0c8;box-shadow:inset 1px 1px #fff, inset -1px -1px #404040, inset -2px -2px #808080;"></div>
<div style="position:absolute;left:1071px;top:88px;width:23px;height:22px;background:#d4d0c8;box-shadow:inset 1px 1px #fff, inset -1px -1px #404040, inset -2px -2px #808080;"></div>
<div style="position:absolute;left:1102px;top:88px;width:23px;height:22px;background:#d4d0c8;box-shadow:inset 1px 1px #fff, inset -1px -1px #404040, inset -2px -2px #808080;"></div>
<div style="position:absolute;left:1125px;top:88px;width:23px;height:22px;background:#d4d0c8;box-shadow:inset 1px 1px #fff, inset -1px -1px #404040, inset -2px -2px #808080;"></div>
<div style="position:absolute;left:1148px;top:88px;width:23px;height:22px;background:#d4d0c8;box-shadow:inset 1px 1px #fff, inset -1px -1px #404040, inset -2px -2px #808080;"></div>
<div style="position:absolute;left:1171px;top:88px;width:23px;height:22px;background:#d4d0c8;box-shadow:inset 1px 1px #fff, inset -1px -1px #404040, inset -2px -2px #808080;"></div>
<div style="position:absolute;left:1194px;top:88px;width:23px;height:22px;background:#d4d0c8;box-shadow:inset 1px 1px #fff, inset -1px -1px #404040, inset -2px -2px #808080;"></div>
<svg style="position:absolute;left:0;top:0" width="1212" height="114"><g transform="translate(648,88)"><path d="M4.5 8.5h4l1 1h4v8h-9z" fill="#ffff80" stroke="#000"/><path d="M4.5 17.5l3-6h11l-3 6z" fill="#808000" stroke="#000"/><path d="M13 7c1-3 4-3 5-1" fill="none" stroke="#000"/><path d="M16 6h3v-3" fill="none" stroke="#000"/></g><g transform="translate(671,88)"><path d="M4.5 8.5h4l1 1h4v8h-9z" fill="#ffff80" stroke="#000"/><path d="M4.5 17.5l3-6h11l-3 6z" fill="#808000" stroke="#000"/><path d="M13 7c1-3 4-3 5-1" fill="none" stroke="#000"/><path d="M16 6h3v-3" fill="none" stroke="#000"/><path d="M5 3v5M2.5 5.5h5" stroke="#000" stroke-width="2"/></g><g transform="translate(694,88)"><path d="M7.5 4.5h8l2 4h-10z" fill="#fff" stroke="#000"/><path d="M4.5 9.5h14l1 2v5h-16v-5z" fill="#fff" stroke="#000"/><path d="M4 12.5h15M4 14.5h15" stroke="#000"/><path d="M11 13.5h4" stroke="#c0c000"/></g><g transform="translate(725,88)"><g fill="none" stroke="#808080"><path d="M9.5 3v6l3 4M13.5 3v6l-3 4"/><circle cx="9" cy="15.5" r="2"/><circle cx="14" cy="15.5" r="2"/></g></g><g transform="translate(748,88)"><g fill="#fff" stroke="#808080"><path d="M4.5 3.5h5l2 2v8h-7z"/><path d="M9.5 7.5h5l2 2v8h-7z"/><path d="M11 11h4M11 13h4M11 15h4"/></g></g><g transform="translate(771,88)"><rect x="4.5" y="5.5" width="11" height="12" fill="#808000" stroke="#000"/><path d="M8.5 3.5h4l1 2h-6z" fill="#fff" stroke="#000"/><rect x="11.5" y="11.5" width="8" height="7" fill="#fff" stroke="#000080"/><path d="M13 15h5" stroke="#000080" stroke-width="2"/></g><g transform="translate(802,88)"><path d="M12 12l6 6" stroke="#000" stroke-width="4"/><path d="M12.3 12.3l5.4 5.4" stroke="#e0e040" stroke-width="2"/><circle cx="8.5" cy="8.5" r="5.5" fill="#d4d0c8" stroke="#000" stroke-width="1.2"/><path d="M5.5 8.5h6M8.5 5.5v6" stroke="#0000e0" stroke-width="2"/></g><g transform="translate(825,88)"><path d="M12 12l6 6" stroke="#000" stroke-width="4"/><path d="M12.3 12.3l5.4 5.4" stroke="#e0e040" stroke-width="2"/><circle cx="8.5" cy="8.5" r="5.5" fill="#d4d0c8" stroke="#000" stroke-width="1.2"/><path d="M5.5 8.5h6" stroke="#0000e0" stroke-width="2"/></g><g transform="translate(848,88)"><path d="M12 12l6 6" stroke="#000" stroke-width="4"/><path d="M12.3 12.3l5.4 5.4" stroke="#e0e040" stroke-width="2"/><circle cx="8.5" cy="8.5" r="5.5" fill="#d4d0c8" stroke="#000" stroke-width="1.2"/><rect x="6" y="6" width="5" height="5" fill="none" stroke="#0000e0" stroke-width="1.3"/><path d="M4 14h6" stroke="#000"/></g><g transform="translate(871,88)"><path d="M12 12l6 6" stroke="#000" stroke-width="4"/><path d="M12.3 12.3l5.4 5.4" stroke="#e0e040" stroke-width="2"/><circle cx="8.5" cy="8.5" r="5.5" fill="#d4d0c8" stroke="#000" stroke-width="1.2"/></g><g transform="translate(902,88)"><rect x="4.5" y="4.5" width="14" height="13" fill="#fff" stroke="#000"/><path d="M7.5 4v14M10.5 4v14M13.5 4v14" stroke="#000" stroke-width="1.5"/><rect x="16" y="4" width="3" height="14" fill="#000"/></g><g transform="translate(925,88)"><path d="M4 3.5h5M5 3v11M4.5 8h4M9 8.5h6M12 8v9M15 7v3" stroke="#000" stroke-width="2" fill="none"/><path d="M7 18.5h12M7 14v5M13 15v4" stroke="#e00000" stroke-width="1.2" fill="none"/></g><g transform="translate(948,88)"><path d="M3 10.5h17M5 5l13 11M5 16l13-11M5.5 6v9M17.5 6v9" stroke="#000" stroke-width="1.3" fill="none"/></g><g transform="translate(971,88)"><rect x="4.5" y="4.5" width="14" height="13" fill="#fff" stroke="#000"/><path d="M4 7.5h15M4 10.5h15M4 13.5h15" stroke="#000" stroke-width="1.5"/></g><g transform="translate(1002,88)"><path d="M4.5 4v13.5h15M19.5 15v3" fill="none" stroke="#000"/><path d="M5 12l3-5 3 3 3-3 3 4h2" fill="none" stroke="#e00000" stroke-width="1.3"/><circle cx="4.5" cy="17.5" r="1" fill="#fff" stroke="#000"/></g><g transform="translate(1025,88)"><path d="M3 9.5h7M6 16l5-7M11 9l-1 3" fill="none" stroke="#000" stroke-width="1.3"/><path d="M4 17c6 0 7-13 15-13" fill="none" stroke="#e00000" stroke-width="1.5"/><text x="12" y="18" font-size="7" font-style="italic" fill="#000" font-family="Liberation Sans">f()</text></g><g transform="translate(1048,88)"><text x="2" y="12" font-size="11" font-weight="bold" fill="#e00000" font-family="Liberation Sans">A</text><text x="11" y="10" font-size="10" font-weight="bold" fill="#008000" font-family="Liberation Sans">B</text><text x="7" y="19" font-size="10" font-weight="bold" fill="#0000e0" font-family="Liberation Sans">C</text></g><g transform="translate(1071,88)"><path d="M3 11c3 9 11 7 15-7" fill="none" stroke="#e00000" stroke-width="2"/><path d="M3 11.5h15M13.5 3v15" stroke="#000" stroke-width="1.5" stroke-dasharray="2 1"/></g><g transform="translate(1102,88)"><path d="M4 10.5h15M11.5 4v14M6 16l5.5-8 5.5 8" fill="none" stroke="#808080" stroke-width="1.3" stroke-dasharray="3 1"/></g><g transform="translate(1125,88)"><path d="M4 13.5h15M11.5 4v14M5 5l6.5 8 6.5-8" fill="none" stroke="#808080" stroke-width="1.3" stroke-dasharray="3 1"/></g><g transform="translate(1148,88)"><path d="M4 10.5h15M11.5 4v14M5 17c6-1 7-12 13-12" fill="none" stroke="#808080" stroke-width="1.3" stroke-dasharray="3 1"/></g><g transform="translate(1171,88)"><path d="M4 14.5h15M13.5 4v14M5 5l5 9 8-9" fill="none" stroke="#808080" stroke-width="1.3" stroke-dasharray="3 1"/></g><g transform="translate(1194,88)"><path d="M4 8.5h15M13.5 4v14M5 15l5-7 3 4 6-7" fill="none" stroke="#808080" stroke-width="1.3" stroke-dasharray="3 1"/></g></svg>
<div style="position:absolute;left:642px;top:114px;width:570px;height:424px;background:#000;box-shadow:inset 1px 1px #808080, inset 2px 2px #404040"></div>
<div style="position:absolute;left:642px;top:538px;width:570px;height:1px;background:#fff"></div>
<svg style="position:absolute;left:0;top:0" width="1212" height="541" shape-rendering="crispEdges"><rect x="708" y="125" width="1" height="7" fill="#c4c4c4"/><line x1="708.5" y1="134" x2="708.5" y2="290" stroke="#c4c4c4" stroke-dasharray="5 3"/><rect x="708" y="320" width="1" height="7" fill="#c4c4c4"/><line x1="708.5" y1="329" x2="708.5" y2="485" stroke="#c4c4c4" stroke-dasharray="5 3"/><rect x="708" y="485" width="1" height="5" fill="#c4c4c4"/><rect x="704" y="125" width="9" height="1" fill="#c4c4c4"/><line x1="716" y1="125.5" x2="1212" y2="125.5" stroke="#c4c4c4" stroke-dasharray="5 3"/><rect x="704" y="290" width="9" height="1" fill="#c4c4c4"/><line x1="716" y1="290.5" x2="1212" y2="290.5" stroke="#c4c4c4" stroke-dasharray="5 3"/><rect x="704" y="320" width="9" height="1" fill="#c4c4c4"/><line x1="716" y1="320.5" x2="1212" y2="320.5" stroke="#c4c4c4" stroke-dasharray="5 3"/><rect x="704" y="485" width="9" height="1" fill="#c4c4c4"/><line x1="716" y1="485.5" x2="1212" y2="485.5" stroke="#c4c4c4" stroke-dasharray="5 3"/><rect x="845" y="486" width="1" height="4" fill="#c4c4c4"/><rect x="845" y="166" width="1" height="1" fill="#c4c4c4"/><rect x="845" y="207" width="1" height="1" fill="#c4c4c4"/><rect x="845" y="249" width="1" height="1" fill="#c4c4c4"/><rect x="845" y="353" width="1" height="1" fill="#c4c4c4"/><rect x="845" y="386" width="1" height="1" fill="#c4c4c4"/><rect x="845" y="419" width="1" height="1" fill="#c4c4c4"/><rect x="845" y="452" width="1" height="1" fill="#c4c4c4"/><rect x="982" y="486" width="1" height="4" fill="#c4c4c4"/><rect x="982" y="166" width="1" height="1" fill="#c4c4c4"/><rect x="982" y="207" width="1" height="1" fill="#c4c4c4"/><rect x="982" y="249" width="1" height="1" fill="#c4c4c4"/><rect x="982" y="353" width="1" height="1" fill="#c4c4c4"/><rect x="982" y="386" width="1" height="1" fill="#c4c4c4"/><rect x="982" y="419" width="1" height="1" fill="#c4c4c4"/><rect x="982" y="452" width="1" height="1" fill="#c4c4c4"/><rect x="1119" y="486" width="1" height="4" fill="#c4c4c4"/><rect x="1119" y="166" width="1" height="1" fill="#c4c4c4"/><rect x="1119" y="207" width="1" height="1" fill="#c4c4c4"/><rect x="1119" y="249" width="1" height="1" fill="#c4c4c4"/><rect x="1119" y="353" width="1" height="1" fill="#c4c4c4"/><rect x="1119" y="386" width="1" height="1" fill="#c4c4c4"/><rect x="1119" y="419" width="1" height="1" fill="#c4c4c4"/><rect x="1119" y="452" width="1" height="1" fill="#c4c4c4"/><polyline points="708.5,182.5 709.5,182.5 710.5,182.5 711.5,182.5 712.5,182.5 713.5,182.5 714.5,182.5 715.5,182.5 716.5,182.5 717.5,182.5 718.5,182.5 719.5,182.5 720.5,182.5 721.5,182.5 722.5,182.5 723.5,182.5 724.5,182.5 725.5,182.5 726.5,182.5 727.5,182.5 728.5,182.5 729.5,182.5 730.5,182.5 731.5,182.5 732.5,182.5 733.5,182.5 734.5,182.5 735.5,182.5 736.5,182.5 737.5,182.5 738.5,182.5 739.5,182.5 740.5,182.5 741.5,182.5 742.5,182.5 743.5,182.5 744.5,182.5 745.5,182.5 746.5,182.5 747.5,182.5 748.5,182.5 749.5,182.5 750.5,182.5 751.5,182.5 752.5,182.5 753.5,182.5 754.5,182.5 755.5,182.5 756.5,182.5 757.5,182.5 758.5,182.5 759.5,182.5 760.5,182.5 761.5,182.5 762.5,182.5 763.5,182.5 764.5,182.5 765.5,182.5 766.5,182.5 767.5,182.5 768.5,182.5 769.5,182.5 770.5,182.5 771.5,182.5 772.5,182.5 773.5,182.5 774.5,182.5 775.5,182.5 776.5,182.5 777.5,182.5 778.5,182.5 779.5,182.5 780.5,182.5 781.5,182.5 782.5,182.5 783.5,182.5 784.5,182.5 785.5,182.5 786.5,182.5 787.5,182.5 788.5,182.5 789.5,182.5 790.5,182.5 791.5,182.5 792.5,182.5 793.5,182.5 794.5,182.5 795.5,182.5 796.5,182.5 797.5,182.5 798.5,182.5 799.5,182.5 800.5,182.5 801.5,182.5 802.5,182.5 803.5,182.5 804.5,182.5 805.5,182.5 806.5,182.5 807.5,182.5 808.5,182.5 809.5,182.5 810.5,182.5 811.5,182.5 812.5,182.5 813.5,182.5 814.5,182.5 815.5,182.5 816.5,182.5 817.5,182.5 818.5,182.5 819.5,182.5 820.5,182.5 821.5,182.5 822.5,182.5 823.5,182.5 824.5,182.5 825.5,182.5 826.5,182.5 827.5,182.5 828.5,182.5 829.5,182.5 830.5,182.5 831.5,182.5 832.5,182.5 833.5,182.5 834.5,182.5 835.5,182.5 836.5,182.5 837.5,182.5 838.5,182.5 839.5,182.5 840.5,182.5 841.5,182.5 842.5,182.5 843.5,182.5 844.5,182.5 845.5,182.5 846.5,182.5 847.5,182.5 848.5,182.5 849.5,182.5 850.5,182.5 851.5,182.5 852.5,182.5 853.5,182.5 854.5,182.5 855.5,182.5 856.5,182.5 857.5,182.5 858.5,182.5 859.5,182.5 860.5,182.5 861.5,182.5 862.5,182.5 863.5,182.5 864.5,182.5 865.5,182.5 866.5,182.5 867.5,182.5 868.5,182.5 869.5,182.5 870.5,182.5 871.5,182.5 872.5,182.5 873.5,182.5 874.5,182.5 875.5,182.5 876.5,182.5 877.5,182.5 878.5,182.5 879.5,182.5 880.5,182.5 881.5,182.5 882.5,182.5 883.5,182.5 884.5,182.5 885.5,182.5 886.5,182.5 887.5,182.5 888.5,182.5 889.5,182.5 890.5,182.5 891.5,182.5 892.5,182.5 893.5,182.5 894.5,182.5 895.5,182.5 896.5,182.5 897.5,182.5 898.5,182.5 899.5,182.5 900.5,182.5 901.5,182.5 902.5,182.5 903.5,182.5 904.5,182.5 905.5,182.5 906.5,182.5 907.5,182.5 908.5,182.5 909.5,182.5 910.5,182.5 911.5,182.5 912.5,182.5 913.5,182.5 914.5,182.5 915.5,182.5 916.5,182.5 917.5,182.5 918.5,182.5 919.5,182.5 920.5,182.5 921.5,182.5 922.5,182.5 923.5,182.5 924.5,182.5 925.5,182.5 926.5,182.5 927.5,182.5 928.5,182.5 929.5,182.5 930.5,182.5 931.5,182.5 932.5,182.5 933.5,182.5 934.5,182.5 935.5,182.5 936.5,182.5 937.5,182.5 938.5,182.5 939.5,182.5 940.5,182.5 941.5,182.5 942.5,182.5 943.5,182.5 944.5,182.5 945.5,182.5 946.5,182.5 947.5,182.5 948.5,182.5 949.5,182.5 950.5,182.5 951.5,182.5 952.5,182.5 953.5,182.5 954.5,182.5 955.5,182.5 956.5,182.5 957.5,182.5 958.5,182.5 959.5,182.5 960.5,182.5 961.5,182.5 962.5,182.5 963.5,182.5 964.5,182.5 965.5,182.5 966.5,182.5 967.5,182.5 968.5,182.5 969.5,182.5 970.5,182.5 971.5,182.5 972.5,182.5 973.5,182.5 974.5,182.5 975.5,182.5 976.5,182.5 977.5,183.5 978.5,183.5 979.5,183.5 980.5,183.5 981.5,183.5 982.5,183.5 983.5,183.5 984.5,183.5 985.5,183.5 986.5,183.5 987.5,183.5 988.5,183.5 989.5,183.5 990.5,183.5 991.5,183.5 992.5,183.5 993.5,184.5 994.5,184.5 995.5,184.5 996.5,184.5 997.5,184.5 998.5,184.5 999.5,184.5 1000.5,184.5 1001.5,185.5 1002.5,185.5 1003.5,185.5 1004.5,185.5 1005.5,185.5 1006.5,186.5 1007.5,186.5 1008.5,186.5 1009.5,186.5 1010.5,187.5 1011.5,187.5 1012.5,187.5 1013.5,188.5 1014.5,188.5 1015.5,188.5 1016.5,189.5 1017.5,189.5 1018.5,190.5 1019.5,190.5 1020.5,191.5 1021.5,191.5 1022.5,192.5 1023.5,192.5 1024.5,193.5 1025.5,193.5 1026.5,194.5 1027.5,195.5 1028.5,196.5 1029.5,196.5 1030.5,197.5 1031.5,198.5 1032.5,199.5 1033.5,200.5 1034.5,201.5 1035.5,202.5 1036.5,203.5 1037.5,204.5 1038.5,205.5 1039.5,206.5 1040.5,207.5 1041.5,208.5 1042.5,209.5 1043.5,211.5 1044.5,212.5 1045.5,213.5 1046.5,214.5 1047.5,216.5 1048.5,217.5 1049.5,218.5 1050.5,220.5 1051.5,221.5 1052.5,222.5 1053.5,224.5 1054.5,225.5 1055.5,227.5 1056.5,228.5 1057.5,229.5 1058.5,231.5 1059.5,232.5 1060.5,234.5 1061.5,235.5 1062.5,236.5 1063.5,238.5 1064.5,239.5 1065.5,240.5 1066.5,242.5 1067.5,243.5 1068.5,244.5 1069.5,246.5 1070.5,247.5 1071.5,248.5 1072.5,249.5 1073.5,250.5 1074.5,251.5 1075.5,253.5 1076.5,254.5 1077.5,255.5 1078.5,256.5 1079.5,257.5 1080.5,258.5 1081.5,259.5 1082.5,260.5 1083.5,261.5 1084.5,262.5 1085.5,262.5 1086.5,263.5 1087.5,264.5 1088.5,265.5 1089.5,266.5 1090.5,267.5 1091.5,267.5 1092.5,268.5 1093.5,269.5 1094.5,269.5 1095.5,270.5 1096.5,271.5 1097.5,271.5 1098.5,272.5 1099.5,272.5 1100.5,273.5 1101.5,274.5 1102.5,274.5 1103.5,275.5 1104.5,275.5 1105.5,276.5 1106.5,276.5 1107.5,277.5 1108.5,277.5 1109.5,277.5 1110.5,278.5 1111.5,278.5 1112.5,279.5 1113.5,279.5 1114.5,279.5 1115.5,280.5 1116.5,280.5 1117.5,280.5 1118.5,281.5 1119.5,281.5 1120.5,281.5 1121.5,282.5 1122.5,282.5 1123.5,282.5 1124.5,282.5 1125.5,283.5 1126.5,283.5 1127.5,283.5 1128.5,283.5 1129.5,284.5 1130.5,284.5 1131.5,284.5 1132.5,284.5 1133.5,284.5 1134.5,285.5 1135.5,285.5 1136.5,285.5 1137.5,285.5 1138.5,285.5 1139.5,285.5 1140.5,286.5 1141.5,286.5 1142.5,286.5 1143.5,286.5 1144.5,286.5 1145.5,286.5 1146.5,286.5 1147.5,286.5 1148.5,287.5 1149.5,287.5 1150.5,287.5 1151.5,287.5 1152.5,287.5 1153.5,287.5 1154.5,287.5 1155.5,287.5 1156.5,287.5 1157.5,287.5 1158.5,288.5 1159.5,288.5 1160.5,288.5 1161.5,288.5 1162.5,288.5 1163.5,288.5 1164.5,288.5 1165.5,288.5 1166.5,288.5 1167.5,288.5 1168.5,288.5 1169.5,288.5 1170.5,288.5 1171.5,288.5 1172.5,288.5 1173.5,289.5 1174.5,289.5 1175.5,289.5 1176.5,289.5 1177.5,289.5 1178.5,289.5 1179.5,289.5 1180.5,289.5 1181.5,289.5 1182.5,289.5 1183.5,289.5 1184.5,289.5 1185.5,289.5 1186.5,289.5 1187.5,289.5 1188.5,289.5" fill="none" stroke="#40e040" stroke-width="1"/><polyline points="708.5,485.5 709.5,485.5 710.5,485.5 711.5,485.5 712.5,485.5 713.5,485.5 714.5,485.5 715.5,485.5 716.5,485.5 717.5,485.5 718.5,485.5 719.5,484.5 720.5,484.5 721.5,484.5 722.5,484.5 723.5,484.5 724.5,484.5 725.5,484.5 726.5,484.5 727.5,484.5 728.5,484.5 729.5,484.5 730.5,484.5 731.5,484.5 732.5,484.5 733.5,484.5 734.5,484.5 735.5,484.5 736.5,484.5 737.5,484.5 738.5,484.5 739.5,484.5 740.5,484.5 741.5,484.5 742.5,484.5 743.5,484.5 744.5,484.5 745.5,484.5 746.5,484.5 747.5,484.5 748.5,484.5 749.5,484.5 750.5,484.5 751.5,484.5 752.5,484.5 753.5,484.5 754.5,484.5 755.5,484.5 756.5,484.5 757.5,484.5 758.5,484.5 759.5,484.5 760.5,484.5 761.5,484.5 762.5,484.5 763.5,484.5 764.5,484.5 765.5,484.5 766.5,484.5 767.5,484.5 768.5,484.5 769.5,484.5 770.5,484.5 771.5,484.5 772.5,484.5 773.5,484.5 774.5,484.5 775.5,484.5 776.5,484.5 777.5,484.5 778.5,484.5 779.5,484.5 780.5,484.5 781.5,484.5 782.5,484.5 783.5,484.5 784.5,483.5 785.5,483.5 786.5,483.5 787.5,483.5 788.5,483.5 789.5,483.5 790.5,483.5 791.5,483.5 792.5,483.5 793.5,483.5 794.5,483.5 795.5,483.5 796.5,483.5 797.5,483.5 798.5,483.5 799.5,483.5 800.5,483.5 801.5,483.5 802.5,483.5 803.5,483.5 804.5,483.5 805.5,483.5 806.5,483.5 807.5,483.5 808.5,483.5 809.5,483.5 810.5,483.5 811.5,483.5 812.5,483.5 813.5,483.5 814.5,482.5 815.5,482.5 816.5,482.5 817.5,482.5 818.5,482.5 819.5,482.5 820.5,482.5 821.5,482.5 822.5,482.5 823.5,482.5 824.5,482.5 825.5,482.5 826.5,482.5 827.5,482.5 828.5,482.5 829.5,482.5 830.5,482.5 831.5,482.5 832.5,482.5 833.5,482.5 834.5,481.5 835.5,481.5 836.5,481.5 837.5,481.5 838.5,481.5 839.5,481.5 840.5,481.5 841.5,481.5 842.5,481.5 843.5,481.5 844.5,481.5 845.5,481.5 846.5,481.5 847.5,481.5 848.5,481.5 849.5,480.5 850.5,480.5 851.5,480.5 852.5,480.5 853.5,480.5 854.5,480.5 855.5,480.5 856.5,480.5 857.5,480.5 858.5,480.5 859.5,480.5 860.5,480.5 861.5,479.5 862.5,479.5 863.5,479.5 864.5,479.5 865.5,479.5 866.5,479.5 867.5,479.5 868.5,479.5 869.5,479.5 870.5,479.5 871.5,478.5 872.5,478.5 873.5,478.5 874.5,478.5 875.5,478.5 876.5,478.5 877.5,478.5 878.5,478.5 879.5,477.5 880.5,477.5 881.5,477.5 882.5,477.5 883.5,477.5 884.5,477.5 885.5,477.5 886.5,477.5 887.5,476.5 888.5,476.5 889.5,476.5 890.5,476.5 891.5,476.5 892.5,476.5 893.5,475.5 894.5,475.5 895.5,475.5 896.5,475.5 897.5,475.5 898.5,475.5 899.5,474.5 900.5,474.5 901.5,474.5 902.5,474.5 903.5,474.5 904.5,474.5 905.5,473.5 906.5,473.5 907.5,473.5 908.5,473.5 909.5,473.5 910.5,472.5 911.5,472.5 912.5,472.5 913.5,472.5 914.5,471.5 915.5,471.5 916.5,471.5 917.5,471.5 918.5,471.5 919.5,470.5 920.5,470.5 921.5,470.5 922.5,469.5 923.5,469.5 924.5,469.5 925.5,469.5 926.5,468.5 927.5,468.5 928.5,468.5 929.5,468.5 930.5,467.5 931.5,467.5 932.5,467.5 933.5,466.5 934.5,466.5 935.5,466.5 936.5,465.5 937.5,465.5 938.5,465.5 939.5,464.5 940.5,464.5 941.5,464.5 942.5,463.5 943.5,463.5 944.5,463.5 945.5,462.5 946.5,462.5 947.5,461.5 948.5,461.5 949.5,461.5 950.5,460.5 951.5,460.5 952.5,459.5 953.5,459.5 954.5,458.5 955.5,458.5 956.5,457.5 957.5,457.5 958.5,457.5 959.5,456.5 960.5,456.5 961.5,455.5 962.5,455.5 963.5,454.5 964.5,454.5 965.5,453.5 966.5,452.5 967.5,452.5 968.5,451.5 969.5,451.5 970.5,450.5 971.5,450.5 972.5,449.5 973.5,448.5 974.5,448.5 975.5,447.5 976.5,447.5 977.5,446.5 978.5,445.5 979.5,445.5 980.5,444.5 981.5,443.5 982.5,442.5 983.5,442.5 984.5,441.5 985.5,440.5 986.5,440.5 987.5,439.5 988.5,438.5 989.5,437.5 990.5,436.5 991.5,436.5 992.5,435.5 993.5,434.5 994.5,433.5 995.5,432.5 996.5,431.5 997.5,430.5 998.5,430.5 999.5,429.5 1000.5,428.5 1001.5,427.5 1002.5,426.5 1003.5,425.5 1004.5,424.5 1005.5,423.5 1006.5,422.5 1007.5,421.5 1008.5,420.5 1009.5,419.5 1010.5,418.5 1011.5,417.5 1012.5,416.5 1013.5,414.5 1014.5,413.5 1015.5,412.5 1016.5,411.5 1017.5,410.5 1018.5,409.5 1019.5,408.5 1020.5,406.5 1021.5,405.5 1022.5,404.5 1023.5,403.5 1024.5,402.5 1025.5,400.5 1026.5,399.5 1027.5,398.5 1028.5,397.5 1029.5,396.5 1030.5,394.5 1031.5,393.5 1032.5,392.5 1033.5,391.5 1034.5,389.5 1035.5,388.5 1036.5,387.5 1037.5,386.5 1038.5,384.5 1039.5,383.5 1040.5,382.5 1041.5,381.5 1042.5,380.5 1043.5,379.5 1044.5,377.5 1045.5,376.5 1046.5,375.5 1047.5,374.5 1048.5,373.5 1049.5,372.5 1050.5,371.5 1051.5,370.5 1052.5,369.5 1053.5,368.5 1054.5,367.5 1055.5,366.5 1056.5,365.5 1057.5,364.5 1058.5,363.5 1059.5,362.5 1060.5,361.5 1061.5,360.5 1062.5,359.5 1063.5,358.5 1064.5,358.5 1065.5,357.5 1066.5,356.5 1067.5,355.5 1068.5,355.5 1069.5,354.5 1070.5,353.5 1071.5,353.5 1072.5,352.5 1073.5,351.5 1074.5,351.5 1075.5,350.5 1076.5,349.5 1077.5,349.5 1078.5,348.5 1079.5,348.5 1080.5,347.5 1081.5,347.5 1082.5,346.5 1083.5,346.5 1084.5,346.5 1085.5,345.5 1086.5,345.5 1087.5,344.5 1088.5,344.5 1089.5,343.5 1090.5,343.5 1091.5,343.5 1092.5,342.5 1093.5,342.5 1094.5,342.5 1095.5,341.5 1096.5,341.5 1097.5,341.5 1098.5,341.5 1099.5,340.5 1100.5,340.5 1101.5,340.5 1102.5,340.5 1103.5,339.5 1104.5,339.5 1105.5,339.5 1106.5,339.5 1107.5,339.5 1108.5,338.5 1109.5,338.5 1110.5,338.5 1111.5,338.5 1112.5,338.5 1113.5,337.5 1114.5,337.5 1115.5,337.5 1116.5,337.5 1117.5,337.5 1118.5,337.5 1119.5,337.5 1120.5,336.5 1121.5,336.5 1122.5,336.5 1123.5,336.5 1124.5,336.5 1125.5,336.5 1126.5,336.5 1127.5,336.5 1128.5,336.5 1129.5,335.5 1130.5,335.5 1131.5,335.5 1132.5,335.5 1133.5,335.5 1134.5,335.5 1135.5,335.5 1136.5,335.5 1137.5,335.5 1138.5,335.5 1139.5,335.5 1140.5,335.5 1141.5,334.5 1142.5,334.5 1143.5,334.5 1144.5,334.5 1145.5,334.5 1146.5,334.5 1147.5,334.5 1148.5,334.5 1149.5,334.5 1150.5,334.5 1151.5,334.5 1152.5,334.5 1153.5,334.5 1154.5,334.5 1155.5,334.5 1156.5,334.5 1157.5,334.5 1158.5,334.5 1159.5,334.5 1160.5,334.5 1161.5,334.5 1162.5,334.5 1163.5,333.5 1164.5,333.5 1165.5,333.5 1166.5,333.5 1167.5,333.5 1168.5,333.5 1169.5,333.5 1170.5,333.5 1171.5,333.5 1172.5,333.5 1173.5,333.5 1174.5,333.5 1175.5,333.5 1176.5,333.5 1177.5,333.5 1178.5,333.5 1179.5,333.5 1180.5,333.5 1181.5,333.5 1182.5,333.5 1183.5,333.5 1184.5,333.5 1185.5,333.5 1186.5,333.5 1187.5,333.5 1188.5,333.5" fill="none" stroke="#40e040" stroke-width="1"/><rect x="710.5" y="303.5" width="6" height="6" fill="none" stroke="#40e040"/><rect x="710.5" y="513.5" width="6" height="6" fill="none" stroke="#40e040"/><rect x="1205" y="497" width="6" height="1" fill="#c4c4c4"/></svg>
<div style="position:absolute;left:669px;top:120px;font-size:13.333px;line-height:1;color:#c4c4c4;white-space:pre;font-family:'Liberation Mono', monospace;text-shadow:0.7px 0 0 #c4c4c4">20uV</div>
<div style="position:absolute;left:663px;top:270px;font-size:13.333px;line-height:1;color:#c4c4c4;white-space:pre;font-family:'Liberation Mono', monospace;text-shadow:0.7px 0 0 #c4c4c4">SEL&gt;&gt;</div>
<div style="position:absolute;left:685px;top:285px;font-size:13.333px;line-height:1;color:#c4c4c4;white-space:pre;font-family:'Liberation Mono', monospace;text-shadow:0.7px 0 0 #c4c4c4">0V</div>
<div style="position:absolute;left:669px;top:315px;font-size:13.333px;line-height:1;color:#c4c4c4;white-space:pre;font-family:'Liberation Mono', monospace;text-shadow:0.7px 0 0 #c4c4c4">5.0m</div>
<div style="position:absolute;left:693px;top:480px;font-size:13.333px;line-height:1;color:#c4c4c4;white-space:pre;font-family:'Liberation Mono', monospace;text-shadow:0.7px 0 0 #c4c4c4">0</div>
<div style="position:absolute;left:724px;top:300px;font-size:13.333px;line-height:1;color:#c4c4c4;white-space:pre;font-family:'Liberation Mono', monospace;text-shadow:0.7px 0 0 #c4c4c4">V(ONOISE)</div>
<div style="position:absolute;left:689px;top:495px;font-size:13.333px;line-height:1;color:#c4c4c4;white-space:pre;font-family:'Liberation Mono', monospace;text-shadow:0.7px 0 0 #c4c4c4">1.0Hz</div>
<div style="position:absolute;left:826px;top:495px;font-size:13.333px;line-height:1;color:#c4c4c4;white-space:pre;font-family:'Liberation Mono', monospace;text-shadow:0.7px 0 0 #c4c4c4">100Hz</div>
<div style="position:absolute;left:962px;top:495px;font-size:13.333px;line-height:1;color:#c4c4c4;white-space:pre;font-family:'Liberation Mono', monospace;text-shadow:0.7px 0 0 #c4c4c4">10KHz</div>
<div style="position:absolute;left:1095px;top:495px;font-size:13.333px;line-height:1;color:#c4c4c4;white-space:pre;font-family:'Liberation Mono', monospace;text-shadow:0.7px 0 0 #c4c4c4">1.0MHz</div>
<div style="position:absolute;left:724px;top:510px;font-size:13.333px;line-height:1;color:#c4c4c4;white-space:pre;font-family:'Liberation Mono', monospace;text-shadow:0.7px 0 0 #c4c4c4">SQRT(S( V(ONOISE)* V(ONOISE)  ))</div>
<div style="position:absolute;left:947px;top:525px;font-size:13.333px;line-height:1;color:#c4c4c4;white-space:pre;font-family:'Liberation Mono', monospace;text-shadow:0.7px 0 0 #c4c4c4">Frequency</div>
</body></html>
